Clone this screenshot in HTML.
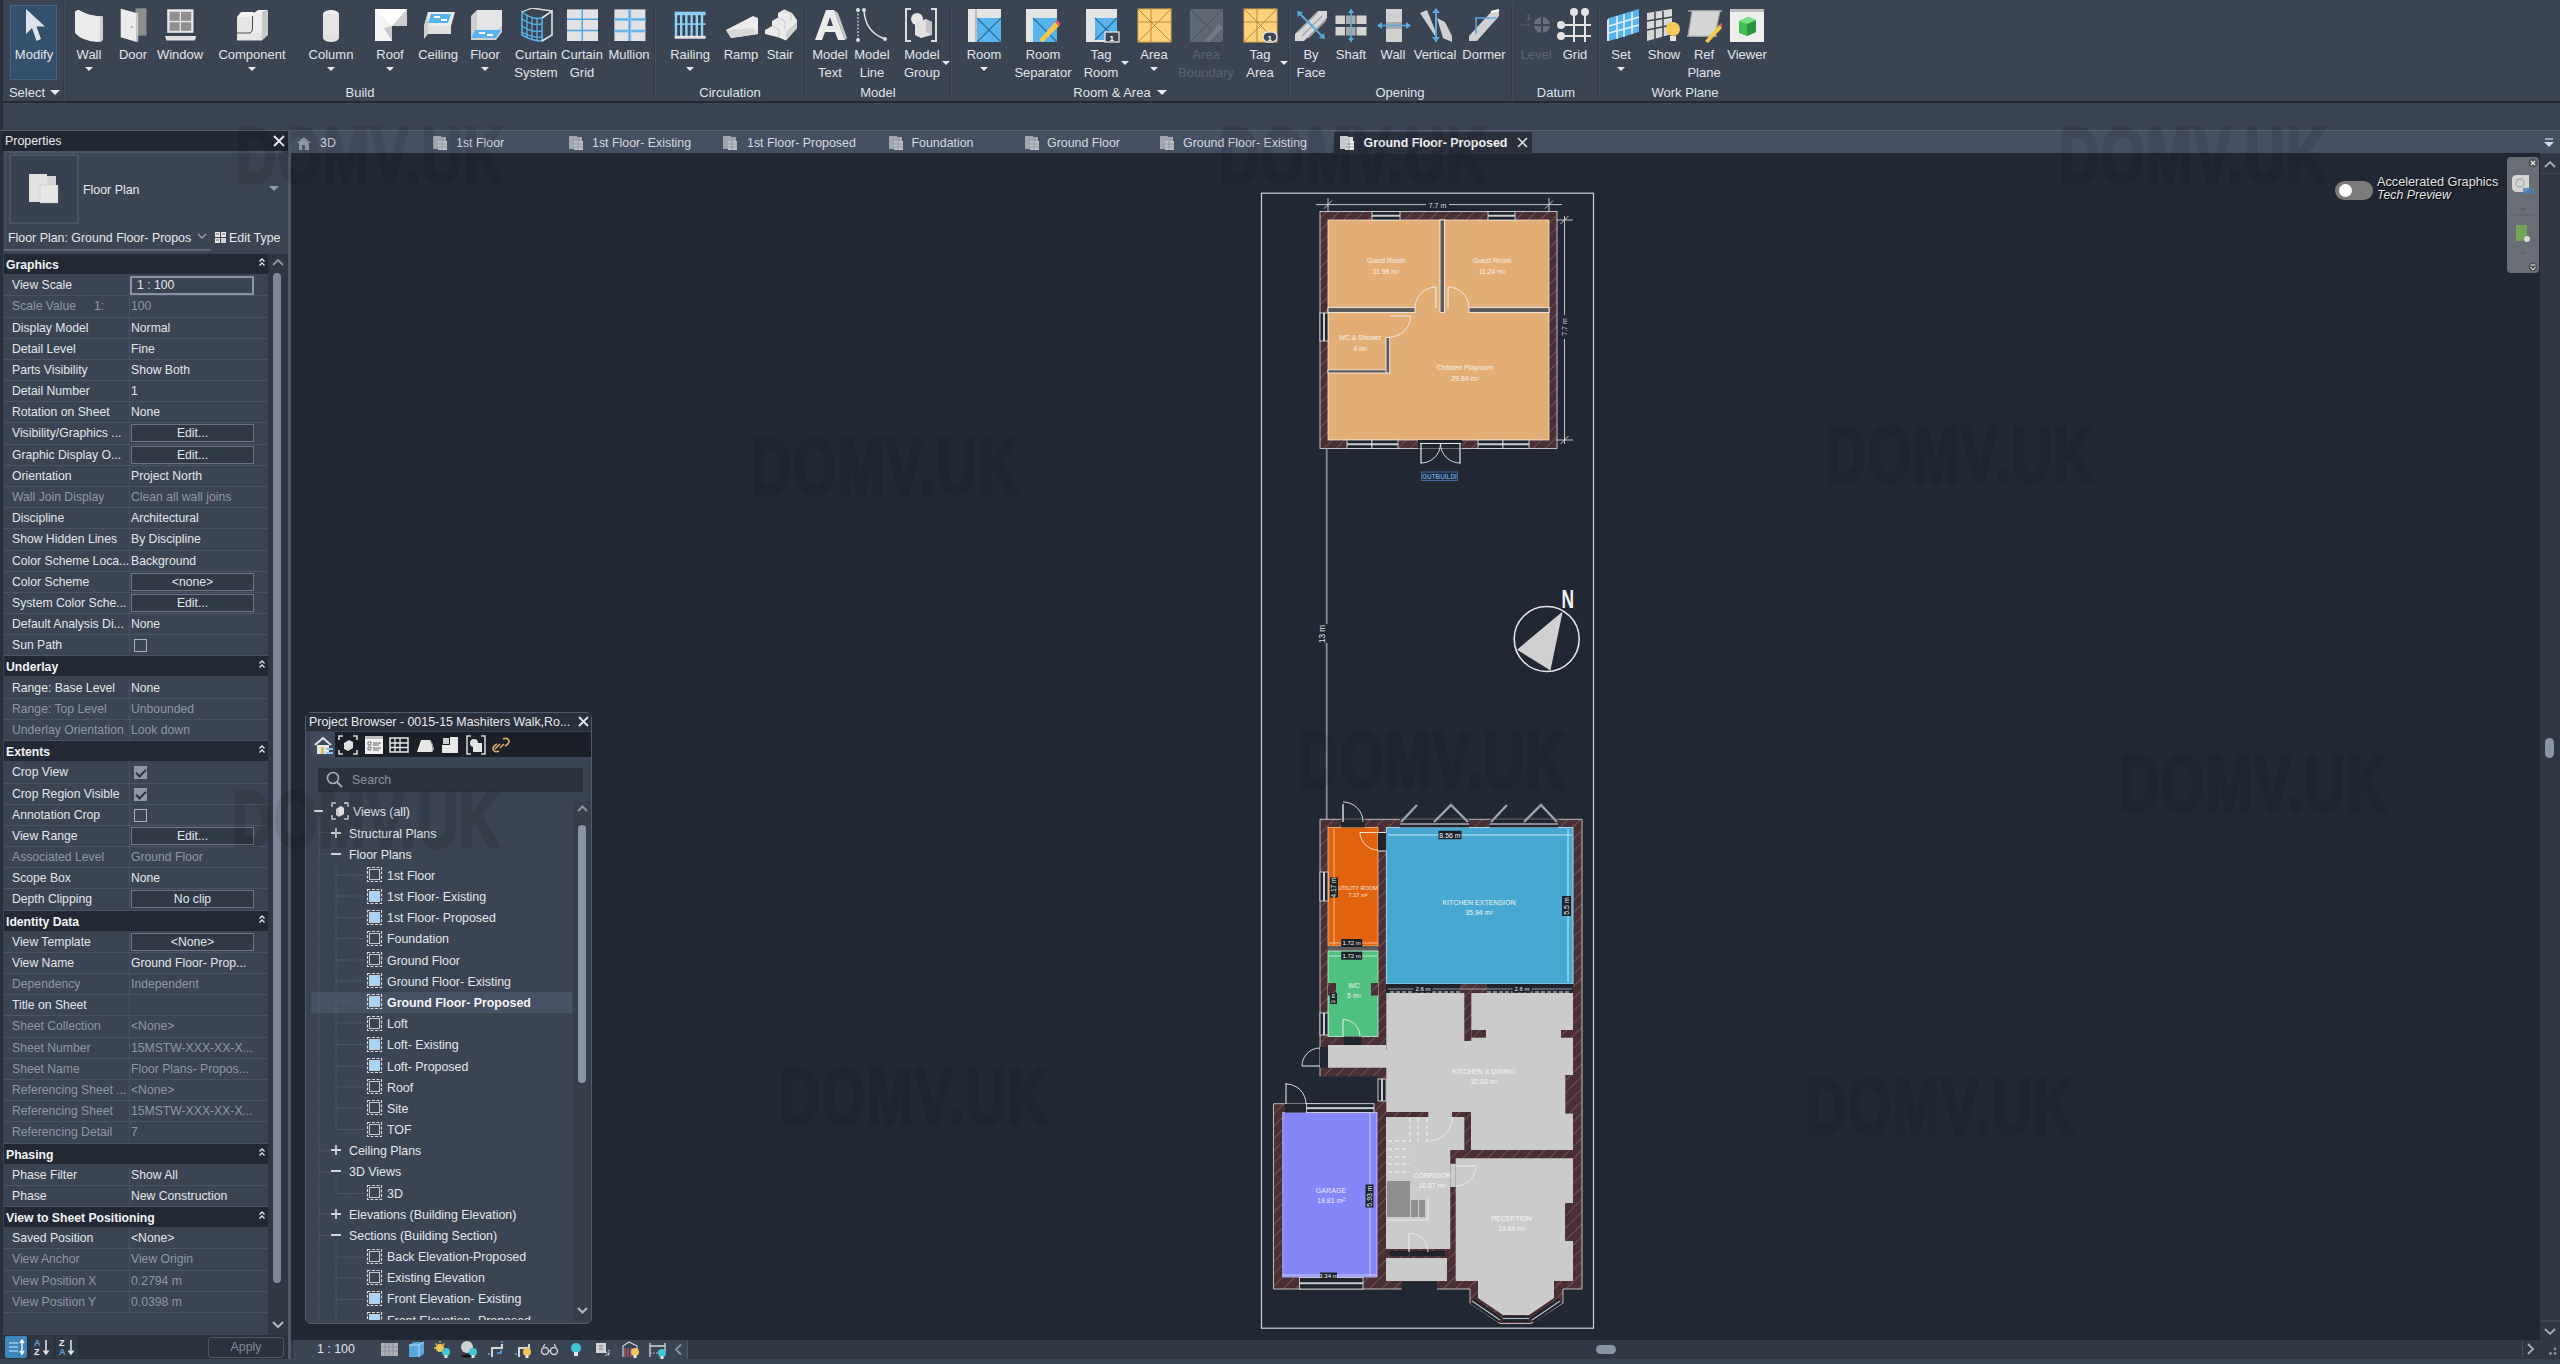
<!DOCTYPE html>
<html><head><meta charset="utf-8">
<style>
*{margin:0;padding:0;box-sizing:border-box}
html,body{width:2560px;height:1364px;overflow:hidden;background:#3b4453;font-family:"Liberation Sans",sans-serif;color:#e6e9ee}
.a{position:absolute}
#ribbon{left:0;top:0;width:2560px;height:101px;background:#3b4453}
#ribbonline{left:0;top:101px;width:2560px;height:2px;background:#252b35}
#options{left:0;top:103px;width:2560px;height:28px;background:#3b4453}
#tabbar{left:291px;top:130px;width:2269px;height:23px;background:#465063;border-top:1px solid #566074}
#canvas{left:291px;top:153px;width:2249px;height:1187px;background:#222833;overflow:hidden}
#props{left:0;top:131px;width:288px;height:1233px;background:#3b4453}
#leftstrip{left:0;top:131px;width:3px;height:1233px;background:#2a303b}
#divider{left:288px;top:131px;width:3px;height:1233px;background:#4f596a}
#propshdr{left:2px;top:131px;width:286px;height:20px;background:#222833}
#bottom{left:0;top:1359px;width:2560px;height:5px;background:#3b4453}
#vscroll{left:2540px;top:154px;width:20px;height:1186px;background:#303744}
#hbar{left:291px;top:1340px;width:2269px;height:19px;background:#313845}


#pgrid{left:4px;top:254px;width:264px;height:1060px;overflow:hidden}
.pr{position:absolute;left:0;width:264px;height:21.2px;border-bottom:1px solid #4a5365;background:#3b4453}
.pr .l{position:absolute;left:8px;top:0;line-height:20px;font-size:12.2px;color:#e3e6eb;white-space:nowrap}
.pr .v{position:absolute;left:127px;top:0;line-height:20px;font-size:12.2px;color:#e3e6eb;white-space:nowrap;padding-left:0}
.pr.g .l,.pr.g .v{color:#8e97a6}
.pr .cd{position:absolute;left:125px;top:0;width:1px;height:21px;background:#465063}
.pr .cd2{position:absolute;left:252px;top:0;width:1px;height:21px;background:#465063}
.ph{position:absolute;left:0;width:264px;height:20px;background:#232934}
.ph .l{position:absolute;left:2px;top:2px;line-height:19px;font-size:12.2px;font-weight:bold;color:#f2f4f6}
.ph .c{position:absolute;left:254px;top:3px;width:8px;height:10px}
.pbtn{position:absolute;left:127px;top:1px;width:123px;height:18px;border:1px solid #6b7486;background:#313947;text-align:center;line-height:17px;font-size:12.2px;color:#e3e6eb}
.pbox{position:absolute;left:126px;top:1px;width:124px;height:19px;border:2px solid #8a93a3;background:#3b4453;line-height:15px;font-size:12.2px;color:#e3e6eb;padding-left:5px}
.chk{position:absolute;left:130px;top:4px;width:13px;height:13px;border:1px solid #aab1bd;background:transparent}
.chk.on{background:#8f97a4;border-color:#8f97a4}
.chk.on:after{content:"";position:absolute;left:3px;top:0px;width:4px;height:8px;border:solid #2b313c;border-width:0 2px 2px 0;transform:rotate(45deg)}


#ptitle{left:5px;top:131px;line-height:20px;font-size:12.4px;color:#e8eaee}
#pclose{left:273px;top:135px;width:12px;height:12px}
#psel{left:5px;top:151px;width:278px;height:100px;border-top:2px solid #4b5568;border-left:1px solid #4b5568}
#picobox{left:9px;top:154px;width:70px;height:70px;border:2px solid #4a5466;background:#384150}
#pfp{left:83px;top:181px;font-size:12.4px;color:#e6e9ee;line-height:18px}
#pdrop{left:269px;top:186px;width:0;height:0;border-left:5px solid transparent;border-right:5px solid transparent;border-top:5px solid #8f98a8}
#pvname{left:8px;top:229px;font-size:12.4px;color:#e6e9ee;line-height:18px;white-space:nowrap;width:184px;overflow:hidden}
#pvline{left:4px;top:249px;width:207px;height:2px;background:#5b6577}
#pchev{left:197px;top:231px;width:10px;height:10px}
#petype{left:229px;top:229px;font-size:12.4px;color:#e6e9ee;line-height:18px;white-space:nowrap}
#petico{left:215px;top:232px;width:11px;height:11px}
#psbar{left:268px;top:254px;width:20px;height:1081px;background:#303643}
#psthumb{left:273px;top:273px;width:8px;height:1010px;border-radius:4px;background:#7c889a}
#pbot{left:3px;top:1335px;width:285px;height:24px;background:#2c323d}
#papply{left:208px;top:1337px;width:76px;height:21px;border:1px solid #4b5466;border-radius:3px;font-size:12.4px;color:#7f8795;text-align:center;line-height:19px}
#psort1{left:5px;top:1336px;width:22px;height:22px;background:#3d86b9;border-radius:2px}


.rl{position:absolute;font-size:13px;color:#e2e5ea;white-space:nowrap;line-height:16px;transform:translateX(-50%);text-align:center}
.rl.gr{color:#586171}
.rarr{position:absolute;width:0;height:0;border-left:4px solid transparent;border-right:4px solid transparent;border-top:4px solid #e8ebef}
.rsep{position:absolute;top:4px;width:2px;height:96px;background:#343c49;border-right:1px solid #444d5c}
.rpl{position:absolute;top:84px;font-size:13px;color:#dfe3e8;line-height:17px;white-space:nowrap;transform:translateX(-50%)}
#modhl{left:10px;top:5px;width:47px;height:75px;background:#35506a;border:1px solid #3d6683}
#panelbar{left:3px;top:84px;width:1940px;height:17px;background:#3b4453}


.tt{position:absolute;top:134px;font-size:12.4px;line-height:18px;color:#d6dae0;white-space:nowrap}
#acttab{left:1334px;top:132px;width:198px;height:22px;background:#2a313d}


#plan{position:absolute;left:291px;top:154px}


#pb{left:305px;top:712px;width:287px;height:612px;background:#3b4453;border:1px solid #535c6d;border-radius:6px;overflow:hidden}
#pbtitle{left:306px;top:713px;width:285px;height:18px;background:#2a303b}
#pbtt{left:309px;top:713px;font-size:12.4px;line-height:18px;color:#e8eaee;white-space:nowrap}
#pbtool{left:335px;top:732px;width:256px;height:25px;background:#1b1f27}
#pbhome{left:311px;top:732px;width:24px;height:25px;background:#3f4a5c}
#pbsearch{left:318px;top:768px;width:265px;height:24px;background:#2c333f}
#pbst{left:352px;top:771px;font-size:12.4px;line-height:18px;color:#8b93a0}
#pbtree{left:311px;top:800px;width:262px;height:518px;overflow:hidden}
.pbr{position:absolute;font-size:12.4px;line-height:18px;color:#e3e6eb;white-space:nowrap}
#pbsb{left:573px;top:801px;width:18px;height:520px;background:#363e4b}
#pbthumb{left:578px;top:825px;width:8px;height:258px;border-radius:4px;background:#8994a6}
#pbsel{left:311px;top:992px;width:261px;height:21px;background:#475164}


#vcb{left:293px;top:1340px;width:395px;height:19px;background:#3b4453;border-right:1px solid #4f596a}
#vcbt{left:317px;top:1340px;font-size:12.4px;line-height:19px;color:#dfe3e8;white-space:nowrap}
#hthumb{left:1596px;top:1345px;width:20px;height:9px;border-radius:4.5px;background:#8994a6}
#navbar{left:2507px;top:157px;width:32px;height:116px;border-radius:4px;background:#686d76}
#agt{left:2377px;top:174px;font-size:12.7px;line-height:16px;color:#e2e4e8;white-space:nowrap;text-shadow:1px 1px 1px #000}
#agt2{left:2377px;top:187px;font-size:12.4px;line-height:16px;color:#e2e4e8;white-space:nowrap;font-style:italic;text-shadow:1px 1px 1px #000}
#tog{left:2335px;top:180.5px;width:38px;height:19.5px;border-radius:10px;background:#7b7b7b}
#togk{left:2339px;top:184px;width:13px;height:13px;border-radius:50%;background:#ffffff}
.wm{position:absolute;font-family:"Liberation Sans",sans-serif;font-weight:bold;font-size:80px;line-height:60px;color:#000;opacity:0.085;white-space:nowrap;transform-origin:0 0;transform:scaleX(0.70);letter-spacing:2px;-webkit-text-stroke:3px #000}
</style></head><body>
<div id="ribbon" class="a"></div><div id="ribbonline" class="a"></div><div id="options" class="a"></div><div class="a" style="left:0;top:0;width:3px;height:131px;background:#2a303b"></div><div class="a" style="left:0;top:130px;width:291px;height:1px;background:#535d6f"></div>
<div id="props" class="a"></div><div id="leftstrip" class="a"></div><div id="propshdr" class="a"></div><div id="divider" class="a"></div>
<div id="tabbar" class="a"></div><div id="canvas" class="a"></div><div id="vscroll" class="a"></div><div id="hbar" class="a"></div><div id="bottom" class="a"></div>
<div id="pgrid" class="a"><div class="ph" style="top:0.00px"><span class="l">Graphics</span><svg class="c" viewBox="0 0 8 10"><path d="M1.5 4.5L4 2L6.5 4.5M1.5 8.5L4 6L6.5 8.5" stroke="#e6e9ee" stroke-width="1.3" fill="none"/></svg></div><div class="pr" style="top:21.18px"><span class="l">View Scale</span><span class="cd"></span><span class="pbox">1 : 100</span></div><div class="pr g" style="top:42.36px"><span class="l">Scale Value<span style="position:absolute;left:82px">1:</span></span><span class="cd"></span><span class="v">100</span></div><div class="pr" style="top:63.54px"><span class="l">Display Model</span><span class="cd"></span><span class="v">Normal</span></div><div class="pr" style="top:84.72px"><span class="l">Detail Level</span><span class="cd"></span><span class="v">Fine</span></div><div class="pr" style="top:105.90px"><span class="l">Parts Visibility</span><span class="cd"></span><span class="v">Show Both</span></div><div class="pr" style="top:127.08px"><span class="l">Detail Number</span><span class="cd"></span><span class="v">1</span></div><div class="pr" style="top:148.26px"><span class="l">Rotation on Sheet</span><span class="cd"></span><span class="v">None</span></div><div class="pr" style="top:169.44px"><span class="l">Visibility/Graphics ...</span><span class="cd"></span><span class="pbtn">Edit...</span></div><div class="pr" style="top:190.62px"><span class="l">Graphic Display O...</span><span class="cd"></span><span class="pbtn">Edit...</span></div><div class="pr" style="top:211.80px"><span class="l">Orientation</span><span class="cd"></span><span class="v">Project North</span></div><div class="pr g" style="top:232.98px"><span class="l">Wall Join Display</span><span class="cd"></span><span class="v">Clean all wall joins</span></div><div class="pr" style="top:254.16px"><span class="l">Discipline</span><span class="cd"></span><span class="v">Architectural</span></div><div class="pr" style="top:275.34px"><span class="l">Show Hidden Lines</span><span class="cd"></span><span class="v">By Discipline</span></div><div class="pr" style="top:296.52px"><span class="l">Color Scheme Loca...</span><span class="cd"></span><span class="v">Background</span></div><div class="pr" style="top:317.70px"><span class="l">Color Scheme</span><span class="cd"></span><span class="pbtn">&lt;none&gt;</span></div><div class="pr" style="top:338.88px"><span class="l">System Color Sche...</span><span class="cd"></span><span class="pbtn">Edit...</span></div><div class="pr" style="top:360.06px"><span class="l">Default Analysis Di...</span><span class="cd"></span><span class="v">None</span></div><div class="pr" style="top:381.24px"><span class="l">Sun Path</span><span class="cd"></span><span class="chk"></span></div><div class="ph" style="top:402.42px"><span class="l">Underlay</span><svg class="c" viewBox="0 0 8 10"><path d="M1.5 4.5L4 2L6.5 4.5M1.5 8.5L4 6L6.5 8.5" stroke="#e6e9ee" stroke-width="1.3" fill="none"/></svg></div><div class="pr" style="top:423.60px"><span class="l">Range: Base Level</span><span class="cd"></span><span class="v">None</span></div><div class="pr g" style="top:444.78px"><span class="l">Range: Top Level</span><span class="cd"></span><span class="v">Unbounded</span></div><div class="pr g" style="top:465.96px"><span class="l">Underlay Orientation</span><span class="cd"></span><span class="v">Look down</span></div><div class="ph" style="top:487.14px"><span class="l">Extents</span><svg class="c" viewBox="0 0 8 10"><path d="M1.5 4.5L4 2L6.5 4.5M1.5 8.5L4 6L6.5 8.5" stroke="#e6e9ee" stroke-width="1.3" fill="none"/></svg></div><div class="pr" style="top:508.32px"><span class="l">Crop View</span><span class="cd"></span><span class="chk on"></span></div><div class="pr" style="top:529.50px"><span class="l">Crop Region Visible</span><span class="cd"></span><span class="chk on"></span></div><div class="pr" style="top:550.68px"><span class="l">Annotation Crop</span><span class="cd"></span><span class="chk"></span></div><div class="pr" style="top:571.86px"><span class="l">View Range</span><span class="cd"></span><span class="pbtn">Edit...</span></div><div class="pr g" style="top:593.04px"><span class="l">Associated Level</span><span class="cd"></span><span class="v">Ground Floor</span></div><div class="pr" style="top:614.22px"><span class="l">Scope Box</span><span class="cd"></span><span class="v">None</span></div><div class="pr" style="top:635.40px"><span class="l">Depth Clipping</span><span class="cd"></span><span class="pbtn">No clip</span></div><div class="ph" style="top:656.58px"><span class="l">Identity Data</span><svg class="c" viewBox="0 0 8 10"><path d="M1.5 4.5L4 2L6.5 4.5M1.5 8.5L4 6L6.5 8.5" stroke="#e6e9ee" stroke-width="1.3" fill="none"/></svg></div><div class="pr" style="top:677.76px"><span class="l">View Template</span><span class="cd"></span><span class="pbtn">&lt;None&gt;</span></div><div class="pr" style="top:698.94px"><span class="l">View Name</span><span class="cd"></span><span class="v">Ground Floor- Prop...</span></div><div class="pr g" style="top:720.12px"><span class="l">Dependency</span><span class="cd"></span><span class="v">Independent</span></div><div class="pr" style="top:741.30px"><span class="l">Title on Sheet</span><span class="cd"></span><span class="v"></span></div><div class="pr g" style="top:762.48px"><span class="l">Sheet Collection</span><span class="cd"></span><span class="v">&lt;None&gt;</span></div><div class="pr g" style="top:783.66px"><span class="l">Sheet Number</span><span class="cd"></span><span class="v">15MSTW-XXX-XX-X...</span></div><div class="pr g" style="top:804.84px"><span class="l">Sheet Name</span><span class="cd"></span><span class="v">Floor Plans- Propos...</span></div><div class="pr g" style="top:826.02px"><span class="l">Referencing Sheet ...</span><span class="cd"></span><span class="v">&lt;None&gt;</span></div><div class="pr g" style="top:847.20px"><span class="l">Referencing Sheet</span><span class="cd"></span><span class="v">15MSTW-XXX-XX-X...</span></div><div class="pr g" style="top:868.38px"><span class="l">Referencing Detail</span><span class="cd"></span><span class="v">7</span></div><div class="ph" style="top:889.56px"><span class="l">Phasing</span><svg class="c" viewBox="0 0 8 10"><path d="M1.5 4.5L4 2L6.5 4.5M1.5 8.5L4 6L6.5 8.5" stroke="#e6e9ee" stroke-width="1.3" fill="none"/></svg></div><div class="pr" style="top:910.74px"><span class="l">Phase Filter</span><span class="cd"></span><span class="v">Show All</span></div><div class="pr" style="top:931.92px"><span class="l">Phase</span><span class="cd"></span><span class="v">New Construction</span></div><div class="ph" style="top:953.10px"><span class="l">View to Sheet Positioning</span><svg class="c" viewBox="0 0 8 10"><path d="M1.5 4.5L4 2L6.5 4.5M1.5 8.5L4 6L6.5 8.5" stroke="#e6e9ee" stroke-width="1.3" fill="none"/></svg></div><div class="pr" style="top:974.28px"><span class="l">Saved Position</span><span class="cd"></span><span class="v">&lt;None&gt;</span></div><div class="pr g" style="top:995.46px"><span class="l">View Anchor</span><span class="cd"></span><span class="v">View Origin</span></div><div class="pr g" style="top:1016.64px"><span class="l">View Position X</span><span class="cd"></span><span class="v">0.2794 m</span></div><div class="pr g" style="top:1037.82px"><span class="l">View Position Y</span><span class="cd"></span><span class="v">0.0398 m</span></div></div>
<div id="ptitle" class="a">Properties</div>
<svg id="pclose" class="a" viewBox="0 0 12 12"><path d="M1 1L11 11M11 1L1 11" stroke="#e3e6ea" stroke-width="2"/></svg>
<div id="psel" class="a"></div>
<div id="picobox" class="a"></div>
<svg class="a" style="left:28px;top:173px" width="32" height="32" viewBox="0 0 32 32"><rect x="1" y="1" width="18" height="28" fill="#e1e1e1"/><rect x="19" y="3" width="9" height="10" fill="#d5d5d5"/><rect x="12" y="12" width="18" height="18" fill="#e6e6e6" stroke="#b8b8b8" stroke-width="0.6" stroke-dasharray="1.5 1"/></svg>
<div id="pfp" class="a">Floor Plan</div>
<div id="pdrop" class="a"></div>
<div id="pvname" class="a">Floor Plan: Ground Floor- Propos</div>
<div id="pvline" class="a"></div>
<svg id="pchev" class="a" viewBox="0 0 10 10"><path d="M1 3L5 7L9 3" stroke="#9aa2b0" stroke-width="1.3" fill="none"/></svg>
<svg id="petico" class="a" viewBox="0 0 11 11"><rect x="0" y="0" width="5" height="5" fill="#e6e6e6"/><rect x="6" y="0" width="5" height="5" fill="#e6e6e6"/><rect x="0" y="6" width="5" height="5" fill="#e6e6e6"/><rect x="6" y="6" width="5" height="5" fill="#cfd3d9"/><path d="M1 2h3M7 2h3M1 8h3" stroke="#444" stroke-width="0.8"/></svg>
<div id="petype" class="a">Edit Type</div>
<div id="psbar" class="a"></div>
<svg class="a" style="left:271px;top:258px" width="14" height="9" viewBox="0 0 14 9"><path d="M2 7L7 2L12 7" stroke="#8b94a3" stroke-width="2" fill="none"/></svg>
<div id="psthumb" class="a"></div>
<svg class="a" style="left:271px;top:1320px" width="14" height="9" viewBox="0 0 14 9"><path d="M2 2L7 7L12 2" stroke="#b4bac4" stroke-width="2" fill="none"/></svg>
<div id="pbot" class="a"></div>
<div id="psort1" class="a"><svg width="22" height="22" viewBox="0 0 22 22"><path d="M4 7h9M4 11h9M4 15h9" stroke="#9cc7e6" stroke-width="1.5"/><path d="M17 5v12M15 7l2-3 2 3M15 15l2 3 2-3" stroke="#ffffff" stroke-width="1.4" fill="none"/></svg></div>
<svg class="a" style="left:31px;top:1336px" width="22" height="22" viewBox="0 0 22 22"><rect x="0" y="0" width="22" height="22" fill="#323946"/><text x="3" y="10" font-size="9" fill="#5aa0d8" font-family="Liberation Sans" font-weight="bold">A</text><text x="3" y="19" font-size="9" fill="#e6e9ee" font-family="Liberation Sans" font-weight="bold">Z</text><path d="M15 4v13M12.5 14.5L15 18l2.5-3.5" stroke="#e6e9ee" stroke-width="1.5" fill="none"/></svg>
<svg class="a" style="left:56px;top:1336px" width="22" height="22" viewBox="0 0 22 22"><rect x="0" y="0" width="22" height="22" fill="#323946"/><text x="3" y="10" font-size="9" fill="#e6e9ee" font-family="Liberation Sans" font-weight="bold">Z</text><text x="3" y="19" font-size="9" fill="#5aa0d8" font-family="Liberation Sans" font-weight="bold">A</text><path d="M15 4v13M12.5 14.5L15 18l2.5-3.5" stroke="#e6e9ee" stroke-width="1.5" fill="none"/></svg>
<div id="papply" class="a">Apply</div>
<div id="modhl" class="a"></div>
<svg class="a" style="left:17px;top:8px" width="35" height="35" viewBox="0 0 35 35"><path d="M9 1L9 26L15 20L19.5 33L24 31L19.5 18.5L28 18.5Z" fill="#dde3ea"/></svg>
<div class="rl" style="left:34px;top:47px">Modify</div>
<svg class="a" style="left:72px;top:8px" width="35" height="35" viewBox="0 0 35 35"><path d="M3 4 Q4 1.5 7 2 Q15 7.5 31 8.5 L31 31 Q30 34 25 34 Q10 33 3 25 Z" fill="#ececec"/><path d="M28 8.3 L31 8.5 L31 31 Q30.5 33.5 28 34 Z" fill="#cdcdcd"/></svg>
<div class="rl" style="left:89px;top:47px">Wall</div>
<div class="rarr" style="left:85px;top:67px"></div>
<svg class="a" style="left:117px;top:8px" width="35" height="35" viewBox="0 0 35 35"><rect x="18.5" y="0.3" width="11" height="27.3" fill="#8e8e8e"/><path d="M3.7 0.8 L19.6 5.1 L19.6 34.1 L3.7 29.2 Z" fill="#ebebeb"/><path d="M19.6 5.1 L21.2 4.6 L21.2 33.6 L19.6 34.1 Z" fill="#c9c9c9"/><circle cx="14.7" cy="18.8" r="0.9" fill="#8a8a8a"/></svg>
<div class="rl" style="left:133px;top:47px">Door</div>
<svg class="a" style="left:163px;top:8px" width="35" height="35" viewBox="0 0 35 35"><rect x="4.2" y="1.3" width="26.3" height="23.5" fill="#e8e8e8"/><rect x="6.5" y="3.8" width="10.2" height="9" fill="#8f8f8f"/><rect x="18" y="3.8" width="10.2" height="9" fill="#8f8f8f"/><rect x="6.5" y="14.3" width="10.2" height="8.5" fill="#8f8f8f"/><rect x="18" y="14.3" width="10.2" height="8.5" fill="#8f8f8f"/><path d="M2 28 L33.2 28 L32 32.5 L3.3 32.5 Z" fill="#e0e0e0"/></svg>
<div class="rl" style="left:180px;top:47px">Window</div>
<svg class="a" style="left:235px;top:8px" width="35" height="35" viewBox="0 0 35 35"><rect x="2" y="9" width="15" height="16" fill="#e6e6e6"/><rect x="17" y="5" width="10" height="27" fill="#ececec"/><rect x="2" y="25" width="25" height="7.5" fill="#e6e6e6"/><path d="M2 9 L6 4 L19 4 L17 9 Z" fill="#f2f2f2"/><path d="M19 5 L23 2 L33 2 L27 5 Z" fill="#f4f4f4"/><path d="M27 5 L33 2 L33 27 L27 32.5 Z" fill="#c8c8c8"/><path d="M2 25 L15 25 Q17 24.5 17.5 21 L17.5 8" stroke="#4a4a4a" stroke-width="1" fill="none"/></svg>
<div class="rl" style="left:252px;top:47px">Component</div>
<div class="rarr" style="left:248px;top:67px"></div>
<svg class="a" style="left:314px;top:8px" width="35" height="35" viewBox="0 0 35 35"><ellipse cx="17" cy="6" rx="8" ry="4" fill="#f0f0f0"/><rect x="9" y="6" width="16" height="24" fill="#e4e4e4"/><ellipse cx="17" cy="30" rx="8" ry="4" fill="#e0e0e0"/></svg>
<div class="rl" style="left:331px;top:47px">Column</div>
<div class="rarr" style="left:327px;top:67px"></div>
<svg class="a" style="left:374px;top:8px" width="35" height="35" viewBox="0 0 35 35"><path d="M1 1L33 1L33 18L18 18L18 33L1 33Z" fill="#e6e6e6"/><path d="M1 1L18 18L18 33L1 33Z" fill="#f4f4f4"/><path d="M1 1L33 1L18 18Z" fill="#ffffff"/><path d="M18 18L33 18L33 1Z" fill="#cfcfcf"/><path d="M18 18L18 33L10 20Z" fill="#c8c8c8"/></svg>
<div class="rl" style="left:390px;top:47px">Roof</div>
<div class="rarr" style="left:386px;top:67px"></div>
<svg class="a" style="left:422px;top:8px" width="35" height="35" viewBox="0 0 35 35"><path d="M6 4L33 4L29 18L2 18Z" fill="#eaeaea"/><path d="M9 6L29 6L26 15L6 15Z" fill="#58b4ec"/><path d="M12 9h6M19 12h6" stroke="#fff" stroke-width="2"/><path d="M2 18L6 4L6 26L2 31Z" fill="#cfcfcf"/><path d="M6 18L29 18L29 26L6 26Z" fill="#e0e0e0"/></svg>
<div class="rl" style="left:438px;top:47px">Ceiling</div>
<svg class="a" style="left:469px;top:8px" width="35" height="35" viewBox="0 0 35 35"><path d="M8 2L33 2L33 22L8 22Z" fill="#e4e4e4"/><path d="M8 2L8 22L2 29L2 8Z" fill="#cfcfcf"/><path d="M2 22L27 22L33 18L33 24L27 32L2 32Z" fill="#cfcfcf"/><path d="M6 22L32 22L27 30L2 30Z" fill="#58b4ec"/><path d="M10 25h6M18 27h6" stroke="#fff" stroke-width="2"/></svg>
<div class="rl" style="left:485px;top:47px">Floor</div>
<div class="rarr" style="left:481px;top:67px"></div>
<svg class="a" style="left:520px;top:8px" width="35" height="35" viewBox="0 0 35 35"><path d="M2 4Q12 12 22 10L22 33Q12 33 2 27Z" fill="none" stroke="#5ab2e6" stroke-width="1.6"/><path d="M22 10L32 3L32 27L22 33" fill="none" stroke="#e0e0e0" stroke-width="1.6"/><path d="M2 4L12 0L32 3" fill="none" stroke="#e0e0e0" stroke-width="1.3"/><path d="M7 7L7 30M12 9L12 32M17 10L17 33M2 11Q12 18 22 16M2 18Q12 25 22 23M2 24Q12 30 22 29" stroke="#5ab2e6" stroke-width="1.3" fill="none"/></svg>
<div class="rl" style="left:536px;top:47px">Curtain</div>
<div class="rl" style="left:536px;top:65px">System</div>
<svg class="a" style="left:566px;top:8px" width="35" height="35" viewBox="0 0 35 35"><rect x="1" y="1.4" width="31" height="31.6" fill="#e2e2e2"/><path d="M1 11.3h31M1 22.5h31M16.2 1.4v31.6" stroke="#4aa3e0" stroke-width="1.4"/></svg>
<div class="rl" style="left:582px;top:47px">Curtain</div>
<div class="rl" style="left:582px;top:65px">Grid</div>
<svg class="a" style="left:614px;top:8px" width="35" height="35" viewBox="0 0 35 35"><rect x="0.4" y="1.4" width="31" height="31.6" fill="#e2e2e2"/><path d="M0.4 11.3h31M0.4 23h31" stroke="#8fc8f0" stroke-width="3.2"/><path d="M0.4 11.3h31M0.4 23h31" stroke="#4aa3e0" stroke-width="1"/><path d="M15.6 1.4v31.6" stroke="#8fc8f0" stroke-width="3.4"/><path d="M15.6 1.4v31.6" stroke="#4aa3e0" stroke-width="1"/></svg>
<div class="rl" style="left:629px;top:47px">Mullion</div>
<svg class="a" style="left:673px;top:8px" width="35" height="35" viewBox="0 0 35 35"><rect x="1.6" y="3.7" width="31" height="3.5" fill="#8dcff5"/><path d="M3 7v21M8.2 7v21M13.4 7v21M18.6 7v21M23.8 7v21M29 7v21" stroke="#8dcff5" stroke-width="2.4"/><rect x="1.6" y="15.3" width="31" height="1.6" fill="#8dcff5"/><rect x="1.6" y="27.8" width="31" height="2.9" fill="#e4e4e4"/></svg>
<div class="rl" style="left:690px;top:47px">Railing</div>
<div class="rarr" style="left:686px;top:67px"></div>
<svg class="a" style="left:725px;top:8px" width="35" height="35" viewBox="0 0 35 35"><path d="M1 22L28 8L33 10L33 26L6 30Z" fill="#ececec"/><path d="M1 22L6 30L33 26L28 20Z" fill="#d8d8d8"/></svg>
<div class="rl" style="left:741px;top:47px">Ramp</div>
<svg class="a" style="left:764px;top:8px" width="35" height="35" viewBox="0 0 35 35"><path d="M1 22 L8 18 L8 13 L14 9.5 L14 5 L20 1.5 L28 5 L33 12 L33 20 L22 32.5 L15 29.5 L1 26 Z" fill="#ebebeb"/><path d="M22 24.5 L33 13.5 L33 20 L22 32.5 Z" fill="#cfcfcf"/><path d="M8 18 L15 21.5 L15 29.5 M14 9.5 L21 13 L21 21 M20 1.5 L27 5 L27 13" stroke="#c4c4c4" stroke-width="0.9" fill="none"/></svg>
<div class="rl" style="left:780px;top:47px">Stair</div>
<svg class="a" style="left:814px;top:8px" width="35" height="35" viewBox="0 0 35 35"><path d="M1 32L12 2L20 2L31 32L24 32L21 24L11 24L8 32Z" fill="#ececec"/><path d="M13 18L19 18L16 9Z" fill="#3b4453"/><path d="M20 2L24 5L33 30L31 32Z" fill="#c6c6c6"/></svg>
<div class="rl" style="left:830px;top:47px">Model</div>
<div class="rl" style="left:830px;top:65px">Text</div>
<svg class="a" style="left:855px;top:8px" width="35" height="35" viewBox="0 0 35 35"><path d="M3 2L3 32" stroke="#cfcfcf" stroke-width="1.3" stroke-dasharray="2 1.5"/><path d="M9 2Q10 24 30 31" stroke="#e4e4e4" stroke-width="1.5" fill="none"/><circle cx="3" cy="2" r="2" fill="#ddd"/><circle cx="9" cy="2" r="2" fill="#ddd"/><circle cx="3" cy="32" r="2" fill="#ddd"/><circle cx="30" cy="31" r="2" fill="#ddd"/></svg>
<div class="rl" style="left:872px;top:47px">Model</div>
<div class="rl" style="left:872px;top:65px">Line</div>
<svg class="a" style="left:904px;top:8px" width="35" height="35" viewBox="0 0 35 35"><path d="M7 1L2 1L2 33L7 33M27 1L32 1L32 33L27 33" stroke="#dcdcdc" stroke-width="2" fill="none"/><circle cx="13" cy="11" r="6" fill="#e8e8e8"/><path d="M11 15L22 11L28 14L28 27L17 30L11 27Z" fill="#e0e0e0"/><path d="M22 11L28 14L28 27L22 24Z" fill="#c4c4c4"/></svg>
<div class="rl" style="left:922px;top:47px">Model</div>
<div class="rl" style="left:922px;top:65px">Group</div>
<div class="rarr" style="left:942px;top:61px"></div>
<svg class="a" style="left:967px;top:8px" width="35" height="35" viewBox="0 0 35 35"><rect x="1" y="1" width="33" height="33" fill="#e4e4e4"/><rect x="10" y="10" width="24" height="24" fill="#58b4ec"/><path d="M10 10L34 34M34 10L10 34" stroke="#2d6fa0" stroke-width="1.2"/><rect x="10" y="1" width="24" height="7" fill="#e4e4e4"/><rect x="8" y="1" width="2" height="33" fill="#bdbdbd"/></svg>
<div class="rl" style="left:984px;top:47px">Room</div>
<div class="rarr" style="left:980px;top:67px"></div>
<svg class="a" style="left:1025px;top:8px" width="35" height="35" viewBox="0 0 35 35"><rect x="1" y="1" width="31" height="33" fill="#e4e4e4"/><rect x="8" y="10" width="24" height="24" fill="#58b4ec"/><path d="M8 10L32 34" stroke="#2d6fa0" stroke-width="1.2"/><path d="M14 32L30 14L34 18L18 34Z" fill="#f2c94c"/><path d="M30 14L34 18L36 16L32 12Z" fill="#e85d5d"/></svg>
<div class="rl" style="left:1043px;top:47px">Room</div>
<div class="rl" style="left:1043px;top:65px">Separator</div>
<svg class="a" style="left:1085px;top:8px" width="35" height="35" viewBox="0 0 35 35"><rect x="1" y="1" width="31" height="33" fill="#e4e4e4"/><rect x="10" y="10" width="22" height="22" fill="#58b4ec"/><path d="M10 10L32 32M32 10L10 32" stroke="#2d6fa0" stroke-width="1.2"/><rect x="20" y="24" width="14" height="10" fill="#3b4453" stroke="#e4e4e4" stroke-width="1.3"/><text x="24.5" y="32.5" font-size="8" fill="#fff" font-family="Liberation Sans" font-weight="bold">1</text></svg>
<div class="rl" style="left:1101px;top:47px">Tag</div>
<div class="rl" style="left:1101px;top:65px">Room</div>
<div class="rarr" style="left:1121px;top:61px"></div>
<svg class="a" style="left:1137px;top:8px" width="35" height="35" viewBox="0 0 35 35"><rect x="1" y="1" width="33" height="33" fill="#fdd27a" stroke="#e0a94a" stroke-width="1"/><path d="M1 1L34 34M34 1L1 34M1 14h33M14 1v33" stroke="#b3843c" stroke-width="0.9"/></svg>
<div class="rl" style="left:1154px;top:47px">Area</div>
<div class="rarr" style="left:1150px;top:67px"></div>
<svg class="a" style="left:1189px;top:8px" width="35" height="35" viewBox="0 0 35 35"><rect x="1" y="1" width="33" height="33" fill="#606876"/><path d="M1 1L34 34M34 1L1 34" stroke="#4e5562" stroke-width="1"/><path d="M16 32L30 16L34 20L20 34Z" fill="#727a87"/></svg>
<div class="rl gr" style="left:1206px;top:47px">Area</div>
<div class="rl gr" style="left:1206px;top:65px">Boundary</div>
<svg class="a" style="left:1243px;top:8px" width="35" height="35" viewBox="0 0 35 35"><rect x="1" y="1" width="33" height="33" fill="#fdd27a" stroke="#e0a94a" stroke-width="1"/><path d="M1 1L34 34M34 1L1 34M1 14h33M14 1v33" stroke="#b3843c" stroke-width="0.9"/><rect x="20" y="24" width="14" height="10" rx="5" fill="#3b4453" stroke="#e4e4e4" stroke-width="1.3"/><text x="24.5" y="32.5" font-size="8" fill="#fff" font-family="Liberation Sans" font-weight="bold">1</text></svg>
<div class="rl" style="left:1260px;top:47px">Tag</div>
<div class="rl" style="left:1260px;top:65px">Area</div>
<div class="rarr" style="left:1280px;top:61px"></div>
<svg class="a" style="left:1294px;top:8px" width="35" height="35" viewBox="0 0 35 35"><path d="M1 26L24 3L33 3L33 10L10 33L1 33Z" fill="#d8d8d8"/><path d="M4 24L24 4M8 28L28 8M14 30L32 12" stroke="#a8a8a8" stroke-width="1.5"/><path d="M5 5L29 29" stroke="#5aa9dd" stroke-width="2"/><path d="M3 3l6 1l-5 5zM31 31l-6-1l5-5z" fill="#5aa9dd"/></svg>
<div class="rl" style="left:1311px;top:47px">By</div>
<div class="rl" style="left:1311px;top:65px">Face</div>
<svg class="a" style="left:1335px;top:8px" width="35" height="35" viewBox="0 0 35 35"><rect x="0.5" y="7.5" width="9.5" height="8.5" fill="#d4d4d4"/><rect x="11" y="7.5" width="9.5" height="8.5" fill="#a9a9a9"/><rect x="21.5" y="7.5" width="10" height="8.5" fill="#d4d4d4"/><rect x="0.5" y="19" width="9.5" height="8.5" fill="#d4d4d4"/><rect x="11" y="19" width="9.5" height="8.5" fill="#a9a9a9"/><rect x="21.5" y="19" width="10" height="8.5" fill="#d4d4d4"/><path d="M16 2v31" stroke="#5aa9dd" stroke-width="1.6"/><path d="M13 5l3-4.5l3 4.5zM13 30l3 4.5l3-4.5z" fill="#5aa9dd"/></svg>
<div class="rl" style="left:1351px;top:47px">Shaft</div>
<svg class="a" style="left:1377px;top:8px" width="35" height="35" viewBox="0 0 35 35"><rect x="9" y="1" width="16" height="13" fill="#d0d0d0"/><rect x="9" y="14" width="16" height="7" fill="#a9a9a9"/><rect x="9" y="21" width="16" height="13" fill="#d0d0d0"/><path d="M1 17.5h32" stroke="#5aa9dd" stroke-width="1.6"/><path d="M5 14l-5 3.5l5 3.5zM29 14l5 3.5l-5 3.5z" fill="#5aa9dd"/></svg>
<div class="rl" style="left:1393px;top:47px">Wall</div>
<svg class="a" style="left:1419px;top:8px" width="35" height="35" viewBox="0 0 35 35"><path d="M1 5L8 2L16 22L16 28Z" fill="#d0d0d0"/><path d="M18 10L26 14L33 28L33 34L24 30Z" fill="#d0d0d0"/><path d="M17 1v33" stroke="#5aa9dd" stroke-width="2"/><path d="M13 5l4-5l4 5zM13 29l4 5l4-5z" fill="#5aa9dd"/></svg>
<div class="rl" style="left:1435px;top:47px">Vertical</div>
<svg class="a" style="left:1466px;top:8px" width="35" height="35" viewBox="0 0 35 35"><path d="M3 28L25 4L33 2L33 8L11 33L3 33Z" fill="#d0d0d0"/><path d="M10 26L10 10L30 10" stroke="#5aa9dd" stroke-width="1.6" fill="none"/><path d="M25 4L33 2" stroke="#fff" stroke-width="2"/></svg>
<div class="rl" style="left:1484px;top:47px">Dormer</div>
<svg class="a" style="left:1520px;top:8px" width="35" height="35" viewBox="0 0 35 35"><circle cx="22" cy="17" r="8" fill="#676f7c"/><path d="M14 17h16M22 9v16" stroke="#3b4453" stroke-width="2"/><path d="M1 17h8" stroke="#646b77" stroke-width="1" stroke-dasharray="2 1"/><text x="6" y="12" font-size="9" fill="#646b77" font-family="Liberation Sans">1</text></svg>
<div class="rl gr" style="left:1536px;top:47px">Level</div>
<svg class="a" style="left:1557px;top:8px" width="35" height="35" viewBox="0 0 35 35"><path d="M17 6v28M28 6v28M6 17h28M6 28h28" stroke="#e4e4e4" stroke-width="2"/><circle cx="17" cy="4" r="4" fill="#e4e4e4"/><circle cx="28" cy="4" r="4" fill="#e4e4e4"/><circle cx="4" cy="17" r="4" fill="#e4e4e4"/><circle cx="4" cy="28" r="4" fill="#e4e4e4"/></svg>
<div class="rl" style="left:1575px;top:47px">Grid</div>
<svg class="a" style="left:1606px;top:8px" width="35" height="35" viewBox="0 0 35 35"><path d="M3 10L33 1L33 24L3 33Z" fill="#58b4ec"/><path d="M3 18L33 9M3 25L33 17M11 8L11 31M18 6L18 29M26 4L26 26" stroke="#e6f2fb" stroke-width="1.5"/><path d="M1 12L3 10L3 33L1 33Z" fill="#e0e0e0"/></svg>
<div class="rl" style="left:1621px;top:47px">Set</div>
<div class="rarr" style="left:1617px;top:67px"></div>
<svg class="a" style="left:1646px;top:8px" width="35" height="35" viewBox="0 0 35 35"><path d="M1 5L26 1L26 26L1 33Z" fill="#d8d8d8"/><path d="M1 13L26 9M1 22L26 17M9 4L9 31M17 3L17 29" stroke="#3b4453" stroke-width="1.5"/><circle cx="27" cy="21" r="7" fill="#f7c85a"/><rect x="24" y="28" width="6" height="5" fill="#e4e4e4"/></svg>
<div class="rl" style="left:1664px;top:47px">Show</div>
<svg class="a" style="left:1687px;top:8px" width="35" height="35" viewBox="0 0 35 35"><path d="M5 3L33 3L28 28L1 28Z" fill="#d6d6d6" stroke="#9a9a9a" stroke-width="1.2"/><path d="M1 3h34M0 28h30" stroke="#cfcfcf" stroke-width="1"/><path d="M18 33L32 17L35 20L21 35Z" fill="#f2c94c"/><path d="M32 17l3 3l2-2l-3-3z" fill="#e85d5d"/></svg>
<div class="rl" style="left:1704px;top:47px">Ref</div>
<div class="rl" style="left:1704px;top:65px">Plane</div>
<svg class="a" style="left:1729px;top:8px" width="35" height="35" viewBox="0 0 35 35"><rect x="1" y="1" width="34" height="33" fill="#eeeeee"/><rect x="1" y="1" width="34" height="3" fill="#bdbdbd"/><path d="M10 13L19 9L27 12L27 24L18 28L10 25Z" fill="#3fbf55"/><path d="M18 16L27 12L27 24L18 28Z" fill="#2b9440"/><path d="M10 13L19 9L27 12L18 16Z" fill="#7ae08a"/></svg>
<div class="rl" style="left:1747px;top:47px">Viewer</div>
<div class="rsep" style="left:63px"></div>
<div class="rsep" style="left:654px"></div>
<div class="rsep" style="left:804px"></div>
<div class="rsep" style="left:950px"></div>
<div class="rsep" style="left:1288px"></div>
<div class="rsep" style="left:1511px"></div>
<div class="rsep" style="left:1598px"></div>
<div class="rpl" style="left:27px">Select</div>
<div class="rarr" style="left:50px;top:90px;border-left-width:5px;border-right-width:5px;border-top-width:5px"></div>
<div class="rpl" style="left:360px">Build</div>
<div class="rpl" style="left:730px">Circulation</div>
<div class="rpl" style="left:878px">Model</div>
<div class="rpl" style="left:1112px">Room &amp; Area</div>
<div class="rarr" style="left:1157px;top:90px;border-left-width:5px;border-right-width:5px;border-top-width:5px"></div>
<div class="rpl" style="left:1400px">Opening</div>
<div class="rpl" style="left:1556px">Datum</div>
<div class="rpl" style="left:1685px">Work Plane</div>
<div id="acttab" class="a"></div>
<svg class="a" style="left:296px;top:135px" width="16" height="16" viewBox="0 0 16 16"><path d="M1 8L8 2L15 8L13 8L13 15L3 15L3 8Z" fill="#8f97a3"/><rect x="6" y="10" width="3" height="5" fill="#4c5464"/></svg>
<div class="tt" style="left:320px">3D</div>
<svg class="a" style="left:432px;top:135px" width="16" height="16" viewBox="0 0 16 16"><rect x="1" y="1" width="8" height="13" fill="#9fa6b1"/><rect x="9" y="2" width="5" height="5" fill="#9fa6b1"/><rect x="6" y="6" width="9" height="9" fill="#b9bec6"/><path d="M6 9h9M6 12h9M10 6v9" stroke="#7d8590" stroke-width="0.6"/></svg>
<div class="tt" style="left:456px">1st Floor</div>
<svg class="a" style="left:568px;top:135px" width="16" height="16" viewBox="0 0 16 16"><rect x="1" y="1" width="8" height="13" fill="#9fa6b1"/><rect x="9" y="2" width="5" height="5" fill="#9fa6b1"/><rect x="6" y="6" width="9" height="9" fill="#b9bec6"/><path d="M6 9h9M6 12h9M10 6v9" stroke="#7d8590" stroke-width="0.6"/></svg>
<div class="tt" style="left:592px">1st Floor- Existing</div>
<svg class="a" style="left:722px;top:135px" width="16" height="16" viewBox="0 0 16 16"><rect x="1" y="1" width="8" height="13" fill="#9fa6b1"/><rect x="9" y="2" width="5" height="5" fill="#9fa6b1"/><rect x="6" y="6" width="9" height="9" fill="#b9bec6"/><path d="M6 9h9M6 12h9M10 6v9" stroke="#7d8590" stroke-width="0.6"/></svg>
<div class="tt" style="left:747px">1st Floor- Proposed</div>
<svg class="a" style="left:888px;top:135px" width="16" height="16" viewBox="0 0 16 16"><rect x="1" y="1" width="8" height="13" fill="#9fa6b1"/><rect x="9" y="2" width="5" height="5" fill="#9fa6b1"/><rect x="6" y="6" width="9" height="9" fill="#b9bec6"/><path d="M6 9h9M6 12h9M10 6v9" stroke="#7d8590" stroke-width="0.6"/></svg>
<div class="tt" style="left:911.5px">Foundation</div>
<svg class="a" style="left:1024px;top:135px" width="16" height="16" viewBox="0 0 16 16"><rect x="1" y="1" width="8" height="13" fill="#9fa6b1"/><rect x="9" y="2" width="5" height="5" fill="#9fa6b1"/><rect x="6" y="6" width="9" height="9" fill="#b9bec6"/><path d="M6 9h9M6 12h9M10 6v9" stroke="#7d8590" stroke-width="0.6"/></svg>
<div class="tt" style="left:1047px">Ground Floor</div>
<svg class="a" style="left:1159px;top:135px" width="16" height="16" viewBox="0 0 16 16"><rect x="1" y="1" width="8" height="13" fill="#9fa6b1"/><rect x="9" y="2" width="5" height="5" fill="#9fa6b1"/><rect x="6" y="6" width="9" height="9" fill="#b9bec6"/><path d="M6 9h9M6 12h9M10 6v9" stroke="#7d8590" stroke-width="0.6"/></svg>
<div class="tt" style="left:1183px">Ground Floor- Existing</div>
<svg class="a" style="left:1339px;top:135px" width="16" height="16" viewBox="0 0 16 16"><rect x="1" y="1" width="8" height="13" fill="#d9dde2"/><rect x="9" y="2" width="5" height="5" fill="#d9dde2"/><rect x="6" y="6" width="9" height="9" fill="#eceef0"/><path d="M6 9h9M6 12h9M10 6v9" stroke="#7d8590" stroke-width="0.6"/></svg>
<div class="tt" style="left:1363.5px;font-weight:bold;color:#f4f5f7">Ground Floor- Proposed</div>
<svg class="a" style="left:1517px;top:137px" width="11" height="11" viewBox="0 0 11 11"><path d="M1 1L10 10M10 1L1 10" stroke="#d4d8de" stroke-width="1.6"/></svg>
<svg class="a" style="left:2543px;top:137px" width="12" height="12" viewBox="0 0 12 12"><path d="M2 2h8" stroke="#d9dde2" stroke-width="1.2"/><path d="M1 5L11 5L6 10Z" fill="#d9dde2"/></svg>
<svg id="plan" width="2249" height="1186" viewBox="291 154 2249 1186"><defs><pattern id="hatch" patternUnits="userSpaceOnUse" width="8.7" height="8.7" patternTransform="rotate(45)"><rect width="8.7" height="8.7" fill="#4a3035"/><line x1="0" y1="0" x2="0" y2="8.7" stroke="#8a6b70" stroke-width="1.1"/></pattern></defs><rect x="1261.5" y="193.2" width="332" height="1135" fill="none" stroke="#cdd1d6" stroke-width="1.2"/><rect x="1320" y="211.5" width="237.00" height="237.00" fill="url(#hatch)" /><rect x="1328" y="220" width="221.00" height="220.00" fill="#e3ae76" /><rect x="1320" y="211.5" width="237" height="237" fill="none" stroke="#e7e2e2" stroke-width="0.8"/><rect x="1328" y="220" width="221" height="220" fill="none" stroke="#f7e7d2" stroke-width="0.8"/><rect x="1440" y="220" width="4.50" height="92.50" fill="#5b5b5d" fill="#5b5b5d" stroke="#f6efe6" stroke-width="0.9"/><rect x="1328" y="307.6" width="87.00" height="4.90" fill="#5b5b5d" fill="#5b5b5d" stroke="#f6efe6" stroke-width="0.9"/><rect x="1469" y="307.6" width="80.00" height="4.90" fill="#5b5b5d" fill="#5b5b5d" stroke="#f6efe6" stroke-width="0.9"/><rect x="1328" y="369.8" width="61.70" height="3.20" fill="#5b5b5d" fill="#5b5b5d" stroke="#f6efe6" stroke-width="0.9"/><rect x="1386" y="337.4" width="3.70" height="35.60" fill="#5b5b5d" fill="#5b5b5d" stroke="#f6efe6" stroke-width="0.9"/><line x1="1390" y1="316" x2="1411" y2="316" stroke="#f0e8de" stroke-width="1" /><path d="M1410.70 316.00 A21 21 0 0 1 1389.70 337.00" fill="none" stroke="#eceae6" stroke-width="0.9"/><line x1="1436" y1="287" x2="1436" y2="308" stroke="#f0e8de" stroke-width="1.2" /><line x1="1448" y1="287" x2="1448" y2="308" stroke="#f0e8de" stroke-width="1.2" /><path d="M1415.00 308.00 A21 21 0 0 1 1436.00 287.00" fill="none" stroke="#eceae6" stroke-width="0.9"/><path d="M1448.00 287.00 A21 21 0 0 1 1469.00 308.00" fill="none" stroke="#eceae6" stroke-width="0.9"/><rect x="1372" y="211.5" width="28.00" height="8.50" fill="#1f242d" /><rect x="1372" y="214.75" width="28.00" height="2.00" fill="#c9cdd2" /><rect x="1372" y="211.5" width="28" height="8.5" fill="none" stroke="#e6e8ea" stroke-width="0.8"/><rect x="1488" y="211.5" width="27.00" height="8.50" fill="#1f242d" /><rect x="1488" y="214.75" width="27.00" height="2.00" fill="#c9cdd2" /><rect x="1488" y="211.5" width="27" height="8.5" fill="none" stroke="#e6e8ea" stroke-width="0.8"/><rect x="1320" y="313" width="8.00" height="28.00" fill="#1f242d" /><rect x="1323.0" y="313" width="2.00" height="28.00" fill="#c9cdd2" /><rect x="1320" y="313" width="8" height="28" fill="none" stroke="#e6e8ea" stroke-width="0.8"/><rect x="1347" y="440" width="25.00" height="8.50" fill="#1f242d" /><rect x="1347" y="443.25" width="25.00" height="2.00" fill="#c9cdd2" /><rect x="1347" y="440" width="25" height="8.5" fill="none" stroke="#e6e8ea" stroke-width="0.8"/><rect x="1372" y="440" width="26.00" height="8.50" fill="#1f242d" /><rect x="1372" y="443.25" width="26.00" height="2.00" fill="#c9cdd2" /><rect x="1372" y="440" width="26" height="8.5" fill="none" stroke="#e6e8ea" stroke-width="0.8"/><rect x="1478" y="440" width="25.00" height="8.50" fill="#1f242d" /><rect x="1478" y="443.25" width="25.00" height="2.00" fill="#c9cdd2" /><rect x="1478" y="440" width="25" height="8.5" fill="none" stroke="#e6e8ea" stroke-width="0.8"/><rect x="1503" y="440" width="26.00" height="8.50" fill="#1f242d" /><rect x="1503" y="443.25" width="26.00" height="2.00" fill="#c9cdd2" /><rect x="1503" y="440" width="26" height="8.5" fill="none" stroke="#e6e8ea" stroke-width="0.8"/><rect x="1418" y="440" width="44.00" height="8.50" fill="#1f242d" /><line x1="1420" y1="443.5" x2="1461" y2="443.5" stroke="#e6e8ea" stroke-width="1" /><line x1="1421" y1="443.5" x2="1421" y2="463.5" stroke="#e6e8ea" stroke-width="1.2" /><line x1="1460" y1="443.5" x2="1460" y2="463.5" stroke="#e6e8ea" stroke-width="1.2" /><path d="M1421.00 463.00 A19.5 19.5 0 0 0 1440.50 443.50" fill="none" stroke="#eceae6" stroke-width="0.9"/><path d="M1460.00 463.00 A19.5 19.5 0 0 1 1440.50 443.50" fill="none" stroke="#eceae6" stroke-width="0.9"/><text x="1386" y="263" font-size="6.8" fill="#f4f0ea" text-anchor="middle" font-family="Liberation Sans" >Guest Room</text><text x="1386" y="273.5" font-size="6.8" fill="#f4f0ea" text-anchor="middle" font-family="Liberation Sans" >11.98 m²</text><text x="1492" y="263" font-size="6.8" fill="#f4f0ea" text-anchor="middle" font-family="Liberation Sans" >Guest Room</text><text x="1492" y="273.5" font-size="6.8" fill="#f4f0ea" text-anchor="middle" font-family="Liberation Sans" >11.24 m²</text><text x="1360" y="340" font-size="6.8" fill="#f4f0ea" text-anchor="middle" font-family="Liberation Sans" >WC &amp; Shower</text><text x="1360" y="350.5" font-size="6.8" fill="#f4f0ea" text-anchor="middle" font-family="Liberation Sans" >4 m²</text><text x="1465" y="370" font-size="6.8" fill="#f4f0ea" text-anchor="middle" font-family="Liberation Sans" >Children Playroom</text><text x="1465" y="380.5" font-size="6.8" fill="#f4f0ea" text-anchor="middle" font-family="Liberation Sans" >29.84 m²</text><rect x="1421.5" y="472" width="36" height="8.5" fill="#1d2a3e" stroke="#4a78b0" stroke-width="0.8"/><text x="1439.5" y="479" font-size="6.4" fill="#6a9ad6" text-anchor="middle" font-family="Liberation Sans" font-weight="bold">OUTBUILDI</text><line x1="1316" y1="204.6" x2="1562" y2="204.6" stroke="#d4d8de" stroke-width="0.9" /><line x1="1328" y1="198" x2="1328" y2="212" stroke="#d4d8de" stroke-width="0.9" /><line x1="1549" y1="198" x2="1549" y2="212" stroke="#d4d8de" stroke-width="0.9" /><line x1="1324" y1="208.6" x2="1332" y2="200.6" stroke="#d4d8de" stroke-width="0.9" /><line x1="1545" y1="208.6" x2="1553" y2="200.6" stroke="#d4d8de" stroke-width="0.9" /><rect x="1426" y="200" width="23.00" height="9.00" fill="#222833" /><text x="1437.5" y="207.6" font-size="7" fill="#d8dce2" text-anchor="middle" font-family="Liberation Sans" >7.7 m</text><line x1="1564.5" y1="216" x2="1564.5" y2="444" stroke="#d4d8de" stroke-width="0.9" /><line x1="1556" y1="220" x2="1573" y2="220" stroke="#d4d8de" stroke-width="0.9" /><line x1="1556" y1="440" x2="1573" y2="440" stroke="#d4d8de" stroke-width="0.9" /><line x1="1560.5" y1="224" x2="1568.5" y2="216" stroke="#d4d8de" stroke-width="0.9" /><line x1="1560.5" y1="444" x2="1568.5" y2="436" stroke="#d4d8de" stroke-width="0.9" /><g transform="translate(1564.5,327) rotate(-90)"><rect x="-12" y="-5" width="24.00" height="10.00" fill="#222833" /><text x="0" y="2.6" font-size="7" fill="#d8dce2" text-anchor="middle" font-family="Liberation Sans" >7.7 m</text></g><line x1="1326.7" y1="448.5" x2="1326.7" y2="624" stroke="#868c95" stroke-width="1.8" /><line x1="1326.7" y1="643" x2="1326.7" y2="826" stroke="#868c95" stroke-width="1.8" /><g transform="translate(1322.5,634) rotate(-90)"><text x="0" y="2.9" font-size="8.2" fill="#e2e5e9" text-anchor="middle" font-family="Liberation Sans" >13 m</text></g><polygon points="1320,819.3 1582,819.3 1582,1289 1563,1289 1563,1303 1531,1323.5 1500,1323.5 1470,1303 1470,1289 1273.5,1289 1273.5,1103.7 1320,1103.7" fill="url(#hatch)" stroke="#e2dcdc" stroke-width="0.8"/><rect x="1319" y="1076.4" width="58.50" height="26.80" fill="#222833" /><rect x="1401.6" y="1281.5" width="35.40" height="8.50" fill="#222833" /><rect x="1320" y="1047" width="8.00" height="20.70" fill="#222833" /><rect x="1328" y="827.4" width="50.00" height="118.60" fill="#e2630f" stroke="#f6c28a" stroke-width="0.8"/><rect x="1328" y="946" width="50.00" height="5.00" fill="#5d5d60" /><rect x="1328" y="951" width="50.00" height="85.50" fill="#4fc07e" stroke="#c8f2d8" stroke-width="0.8"/><rect x="1386.3" y="827.4" width="186.70" height="156.60" fill="#47a9d1" stroke="#bfe8f8" stroke-width="0.8"/><rect x="1386" y="984" width="187.00" height="9.00" fill="#1f242d" /><rect x="1460" y="984" width="27.00" height="9.00" fill="url(#hatch)" /><line x1="1390" y1="992" x2="1460" y2="992" stroke="#e6e8ea" stroke-width="1" stroke-dasharray="4 2"/><line x1="1487" y1="992" x2="1570" y2="992" stroke="#e6e8ea" stroke-width="1" stroke-dasharray="4 2"/><rect x="1386.3" y="993" width="186.70" height="157.00" fill="#cbcbcb" /><rect x="1328" y="1045" width="58.00" height="22.70" fill="#cbcbcb" /><rect x="1386" y="1050" width="4.00" height="17.70" fill="#cbcbcb" /><rect x="1464.3" y="993" width="7.00" height="48.00" fill="url(#hatch)" /><rect x="1471.3" y="1030" width="14.70" height="7.70" fill="url(#hatch)" /><rect x="1561" y="1030" width="12.00" height="7.70" fill="url(#hatch)" /><rect x="1565.3" y="1075" width="7.70" height="38.60" fill="url(#hatch)" /><rect x="1378" y="1079" width="8.00" height="22.00" fill="#1f242d" /><rect x="1381.0" y="1079" width="2.00" height="22.00" fill="#c9cdd2" /><rect x="1378" y="1079" width="8" height="22" fill="none" stroke="#e6e8ea" stroke-width="0.8"/><rect x="1328" y="983" width="8.00" height="12.50" fill="url(#hatch)" /><rect x="1371" y="983" width="7.00" height="12.50" fill="url(#hatch)" /><rect x="1282.8" y="1112.6" width="94.20" height="164.40" fill="#8686fb" stroke="#c9c9ff" stroke-width="0.8"/><rect x="1386" y="1117" width="78.30" height="33.00" fill="#cbcbcb" /><rect x="1386" y="1150" width="64.50" height="99.00" fill="#cbcbcb" /><rect x="1386" y="1258" width="61.00" height="23.00" fill="#cbcbcb" /><rect x="1386" y="1112" width="42.50" height="5.00" fill="url(#hatch)" /><rect x="1452" y="1112" width="19.00" height="5.00" fill="url(#hatch)" /><rect x="1464.3" y="1112" width="6.70" height="38.00" fill="url(#hatch)" /><rect x="1428.5" y="1112" width="23.50" height="5.00" fill="#cbcbcb" /><rect x="1450.5" y="1150" width="130.50" height="8.30" fill="url(#hatch)" /><rect x="1450.5" y="1158" width="5.20" height="5.80" fill="url(#hatch)" /><rect x="1450.5" y="1187" width="5.20" height="94.00" fill="url(#hatch)" /><rect x="1450.5" y="1163.8" width="5.20" height="23.20" fill="#cbcbcb" /><rect x="1386" y="1249" width="61.00" height="9.00" fill="url(#hatch)" /><rect x="1390" y="1251" width="19.00" height="5.00" fill="#1f242d" /><rect x="1410" y="1251" width="35.00" height="5.00" fill="#1f242d" /><polygon points="1455.7,1158.3 1573,1158.3 1573,1203 1565,1203 1565,1241 1573,1241 1573,1281 1554,1281 1554,1298 1529,1315 1503,1315 1478,1298 1478,1281 1455.7,1281" fill="#cbcbcb" /><path d="M1472 1301 L1500 1320 M1532 1320 L1560 1301" stroke="#1f242d" stroke-width="6" fill="none"/><path d="M1472 1301 L1500 1320 M1532 1320 L1560 1301" stroke="#b8bcc2" stroke-width="1.2" fill="none"/><rect x="1503" y="1316" width="26.00" height="6.00" fill="#1f242d" /><line x1="1503" y1="1318.5" x2="1529" y2="1318.5" stroke="#b8bcc2" stroke-width="1.2" /><line x1="1388" y1="1141" x2="1410" y2="1141" stroke="#f4f4f4" stroke-width="1.2" stroke-dasharray="4 3"/><line x1="1388" y1="1149" x2="1410" y2="1149" stroke="#f4f4f4" stroke-width="1.2" stroke-dasharray="4 3"/><line x1="1388" y1="1157" x2="1410" y2="1157" stroke="#f4f4f4" stroke-width="1.2" stroke-dasharray="4 3"/><line x1="1388" y1="1164" x2="1410" y2="1164" stroke="#f4f4f4" stroke-width="1.2" stroke-dasharray="4 3"/><line x1="1388" y1="1172" x2="1410" y2="1172" stroke="#f4f4f4" stroke-width="1.2" stroke-dasharray="4 3"/><line x1="1410" y1="1118" x2="1410" y2="1142" stroke="#f4f4f4" stroke-width="1" stroke-dasharray="4 3"/><line x1="1418" y1="1118" x2="1418" y2="1142" stroke="#f4f4f4" stroke-width="1" stroke-dasharray="4 3"/><line x1="1427" y1="1118" x2="1427" y2="1142" stroke="#f4f4f4" stroke-width="1" stroke-dasharray="4 3"/><rect x="1387" y="1181" width="23.00" height="36.00" fill="#8e8e8e" /><rect x="1411" y="1200" width="7.00" height="17.00" fill="#8e8e8e" /><rect x="1419" y="1200" width="6.00" height="17.00" fill="#8e8e8e" /><line x1="1387" y1="1220" x2="1428" y2="1220" stroke="#f0f0f0" stroke-width="0.8" /><line x1="1428" y1="1198" x2="1428" y2="1220" stroke="#f0f0f0" stroke-width="0.8" /><line x1="1409" y1="1233" x2="1409" y2="1252" stroke="#f0f0f0" stroke-width="1" /><path d="M1409.00 1233.00 A19 19 0 0 1 1428.00 1252.00" fill="none" stroke="#eceae6" stroke-width="0.9"/><path d="M1452.50 1117.00 A24 24 0 0 1 1428.50 1141.00" fill="none" stroke="#eceae6" stroke-width="0.9"/><line x1="1455.7" y1="1166" x2="1475" y2="1166" stroke="#f0f0f0" stroke-width="1" /><path d="M1475.70 1166.00 A20 20 0 0 1 1455.70 1186.00" fill="none" stroke="#eceae6" stroke-width="0.9"/><rect x="1343.6" y="1036.5" width="18.00" height="8.50" fill="#1f242d" /><line x1="1343" y1="1036.5" x2="1343" y2="1020" stroke="#f0f0f0" stroke-width="1" /><path d="M1343.00 1019.50 A17 17 0 0 1 1360.00 1036.50" fill="none" stroke="#eceae6" stroke-width="0.9"/><rect x="1341" y="819.3" width="23.70" height="8.10" fill="#1f242d" /><line x1="1343" y1="804" x2="1343" y2="822" stroke="#dfe2e6" stroke-width="1.4" /><path d="M1343.00 802.00 A20 20 0 0 1 1363.00 822.00" fill="none" stroke="#eceae6" stroke-width="0.9"/><rect x="1378" y="832" width="8.30" height="19.00" fill="#1f242d" /><line x1="1360" y1="832.5" x2="1386" y2="832.5" stroke="#f0e0d0" stroke-width="1" /><line x1="1378" y1="851" x2="1386.3" y2="851" stroke="#f0e0d0" stroke-width="1" /><path d="M1360.00 832.00 A18 18 0 0 0 1378.00 850.00" fill="none" stroke="#eceae6" stroke-width="0.9"/><line x1="1302" y1="1066" x2="1320" y2="1066" stroke="#f0f0f0" stroke-width="1" /><path d="M1302.00 1066.00 A18 18 0 0 1 1320.00 1048.00" fill="none" stroke="#eceae6" stroke-width="0.9"/><rect x="1284.8" y="1103.7" width="21.70" height="8.90" fill="#1f242d" /><line x1="1286" y1="1083" x2="1286" y2="1104" stroke="#f0f0f0" stroke-width="1" /><path d="M1286.00 1084.00 A20 20 0 0 1 1306.00 1104.00" fill="none" stroke="#eceae6" stroke-width="0.9"/><rect x="1306.5" y="1103.7" width="67.50" height="8.90" fill="#1f242d" /><rect x="1306.5" y="1107.15" width="67.50" height="2.00" fill="#c9cdd2" /><rect x="1306.5" y="1103.7" width="67.5" height="8.899999999999864" fill="none" stroke="#e6e8ea" stroke-width="0.8"/><rect x="1299.6" y="1277.5" width="63.40" height="11.50" fill="#1f242d" /><rect x="1299.6" y="1282.25" width="63.40" height="2.00" fill="#c9cdd2" /><rect x="1299.6" y="1277.5" width="63.40000000000009" height="11.5" fill="none" stroke="#e6e8ea" stroke-width="0.8"/><rect x="1320" y="872" width="8.00" height="29.00" fill="#1f242d" /><rect x="1323.0" y="872" width="2.00" height="29.00" fill="#c9cdd2" /><rect x="1320" y="872" width="8" height="29" fill="none" stroke="#e6e8ea" stroke-width="0.8"/><rect x="1320" y="1013" width="8.00" height="22.00" fill="#1f242d" /><rect x="1323.0" y="1013" width="2.00" height="22.00" fill="#c9cdd2" /><rect x="1320" y="1013" width="8" height="22" fill="none" stroke="#e6e8ea" stroke-width="0.8"/><rect x="1400" y="819.3" width="69.00" height="8.10" fill="#1f242d" /><rect x="1490" y="819.3" width="68.00" height="8.10" fill="#1f242d" /><line x1="1400" y1="824" x2="1469" y2="824" stroke="#eeeeee" stroke-width="1.2" /><line x1="1490" y1="824" x2="1558" y2="824" stroke="#eeeeee" stroke-width="1.2" /><path d="M1401 822 L1417 805 M1434 822 L1451 805 L1468 822 M1491 822 L1507 805 M1524 822 L1541 805 L1557 822" stroke="#9ea3a9" stroke-width="2.4" fill="none"/><line x1="1388" y1="835" x2="1572" y2="835" stroke="#c9f0ff" stroke-width="0.9" /><line x1="1568" y1="829" x2="1568" y2="982" stroke="#c9f0ff" stroke-width="0.9" /><line x1="1334" y1="829" x2="1334" y2="945" stroke="#ffd2a6" stroke-width="0.8" /><line x1="1329" y1="943" x2="1377" y2="943" stroke="#ffd2a6" stroke-width="0.8" /><line x1="1329" y1="956" x2="1377" y2="956" stroke="#d2ffe2" stroke-width="0.8" /><line x1="1282" y1="1275" x2="1377" y2="1275" stroke="#dcdcff" stroke-width="0.8" /><line x1="1370" y1="1113" x2="1370" y2="1276" stroke="#dcdcff" stroke-width="0.8" /><line x1="1388" y1="989" x2="1572" y2="989" stroke="#b8bcc2" stroke-width="0.8" /><rect x="1438.5" y="830.75" width="23.00" height="8.50" fill="#1c2129" /><text x="1450" y="837.65" font-size="7" fill="#f2f4f6" text-anchor="middle" font-family="Liberation Sans" >8.56 m</text><g transform="translate(1566.5,906) rotate(-90)"><rect x="-10.0" y="-4.5" width="20.00" height="9.00" fill="#1c2129" /><text x="0" y="2.9" font-size="7" fill="#f2f4f6" text-anchor="middle" font-family="Liberation Sans" >5.5 m</text></g><g transform="translate(1334,887.5) rotate(-90)"><rect x="-10.0" y="-4.0" width="20.00" height="8.00" fill="#1c2129" /><text x="0" y="2.4" font-size="6.5" fill="#f2f4f6" text-anchor="middle" font-family="Liberation Sans" >4.17 m</text></g><rect x="1341.2" y="939.0" width="21.00" height="8.00" fill="#1c2129" /><text x="1351.7" y="945.4" font-size="6" fill="#f2f4f6" text-anchor="middle" font-family="Liberation Sans" >1.72 m</text><rect x="1341.2" y="951.7" width="21.00" height="8.00" fill="#1c2129" /><text x="1351.7" y="958.1" font-size="6" fill="#f2f4f6" text-anchor="middle" font-family="Liberation Sans" >1.72 m</text><g transform="translate(1333.5,998.5) rotate(-90)"><rect x="-5.5" y="-3.5" width="11.00" height="7.00" fill="#1c2129" /><text x="0" y="1.9" font-size="6" fill="#f2f4f6" text-anchor="middle" font-family="Liberation Sans" >3 m</text></g><rect x="1413.5" y="985.5" width="19.00" height="7.00" fill="#1c2129" /><text x="1423" y="990.9" font-size="6" fill="#f2f4f6" text-anchor="middle" font-family="Liberation Sans" >2.6 m</text><rect x="1512.5" y="985.5" width="19.00" height="7.00" fill="#1c2129" /><text x="1522" y="990.9" font-size="6" fill="#f2f4f6" text-anchor="middle" font-family="Liberation Sans" >2.6 m</text><g transform="translate(1369.5,1196) rotate(-90)"><rect x="-11.5" y="-4.0" width="23.00" height="8.00" fill="#1c2129" /><text x="0" y="2.4" font-size="7" fill="#f2f4f6" text-anchor="middle" font-family="Liberation Sans" >5.93 m</text></g><rect x="1320.0" y="1272.5" width="17.00" height="7.00" fill="#1c2129" /><text x="1328.5" y="1277.9" font-size="6" fill="#f2f4f6" text-anchor="middle" font-family="Liberation Sans" >3.34 m</text><text x="1358" y="890" font-size="5.6" fill="#f4f0ea" text-anchor="middle" font-family="Liberation Sans" >UTILITY ROOM</text><text x="1358" y="897" font-size="5.6" fill="#f4f0ea" text-anchor="middle" font-family="Liberation Sans" >7.17 m²</text><text x="1479" y="904.5" font-size="7" fill="#f4f0ea" text-anchor="middle" font-family="Liberation Sans" >KITCHEN EXTENSION</text><text x="1479" y="914.5" font-size="7" fill="#f4f0ea" text-anchor="middle" font-family="Liberation Sans" >35.94 m²</text><text x="1354" y="987.5" font-size="7" fill="#f4f0ea" text-anchor="middle" font-family="Liberation Sans" >WC</text><text x="1354" y="997.5" font-size="7" fill="#f4f0ea" text-anchor="middle" font-family="Liberation Sans" >5 m²</text><text x="1484" y="1073.5" font-size="6.9" fill="#f6f6f6" text-anchor="middle" font-family="Liberation Sans" >KITCHEN &amp; DINING</text><text x="1484" y="1083.5" font-size="6.9" fill="#f6f6f6" text-anchor="middle" font-family="Liberation Sans" >32.03 m²</text><text x="1331" y="1192.5" font-size="7.1" fill="#ececff" text-anchor="middle" font-family="Liberation Sans" >GARAGE</text><text x="1331" y="1202.5" font-size="7.1" fill="#ececff" text-anchor="middle" font-family="Liberation Sans" >19.81 m²</text><text x="1432" y="1177.5" font-size="6.9" fill="#f6f6f6" text-anchor="middle" font-family="Liberation Sans" >CORRIDOR</text><text x="1432" y="1187.5" font-size="6.9" fill="#f6f6f6" text-anchor="middle" font-family="Liberation Sans" >10.87 m²</text><text x="1511.5" y="1220.5" font-size="6.9" fill="#f6f6f6" text-anchor="middle" font-family="Liberation Sans" >RECEPTION</text><text x="1511.5" y="1230.5" font-size="6.9" fill="#f6f6f6" text-anchor="middle" font-family="Liberation Sans" >19.84 m²</text><circle cx="1546.7" cy="639" r="32.5" fill="none" stroke="#e2e4e8" stroke-width="1.6"/><polygon points="1562.7,611.4 1517,649.7 1550.4,670.4" fill="#d0d0d0"/><text x="1567.8" y="608.3" font-size="25.5" font-weight="bold" fill="#f2f2f2" text-anchor="middle" font-family="Liberation Sans" transform="translate(1567.8 0) scale(0.68 1) translate(-1567.8 0)">N</text></svg>
<div id="pb" class="a"></div>
<div id="pbtitle" class="a"></div>
<div id="pbtt" class="a">Project Browser - 0015-15 Mashiters Walk,Ro...</div>
<svg class="a" style="left:578px;top:716px" width="11" height="11" viewBox="0 0 11 11"><path d="M1 1L10 10M10 1L1 10" stroke="#e3e6ea" stroke-width="1.8"/></svg>
<div id="pbhome" class="a"></div>
<div id="pbtool" class="a"></div>
<svg class="a" style="left:313px;top:735px" width="20" height="20" viewBox="0 0 20 20"><path d="M2 10L10 3L18 10" stroke="#e6e6e6" stroke-width="2" fill="none"/><rect x="4" y="10" width="12" height="9" fill="#e6e6e6"/><rect x="8" y="12" width="3" height="7" fill="#d8c060"/><rect x="13" y="13" width="7" height="2" fill="#8ec6ef"/><rect x="13" y="17" width="7" height="2" fill="#8ec6ef"/></svg>
<svg class="a" style="left:338px;top:735px" width="20" height="20" viewBox="0 0 20 20"><path d="M1 5V1H5M15 1H19V5M19 15V19H15M5 19H1V15" stroke="#d8d8d8" stroke-width="1.6" fill="none"/><path d="M6 8L11 5L15 7L15 13L10 16L6 14Z" fill="#e0e0e0"/></svg>
<svg class="a" style="left:364px;top:735px" width="20" height="20" viewBox="0 0 20 20"><rect x="1" y="1" width="18" height="18" fill="#f2f2f2"/><rect x="1" y="1" width="18" height="3" fill="#bdbdbd"/><path d="M4 7h3v3H4zM4 12h3v3H4z" fill="none" stroke="#555" stroke-width="0.8"/><path d="M9 8h8M9 10h6M9 13h8M9 15h6" stroke="#666" stroke-width="1"/></svg>
<svg class="a" style="left:389px;top:735px" width="20" height="20" viewBox="0 0 20 20"><rect x="1" y="3" width="18" height="14" fill="none" stroke="#e8e8e8" stroke-width="1.5"/><path d="M1 8h18M1 12.5h18M6 3v14M11 3v14" stroke="#e8e8e8" stroke-width="1.3"/></svg>
<svg class="a" style="left:415px;top:735px" width="20" height="20" viewBox="0 0 20 20"><path d="M2 17L6 5L15 5L19 14L17 17Z" fill="#e6e6e6"/><path d="M15 5Q19 9 17 17" stroke="#999" stroke-width="1" fill="none"/></svg>
<svg class="a" style="left:440px;top:735px" width="20" height="20" viewBox="0 0 20 20"><rect x="2" y="2" width="16" height="16" fill="#e8e8e8"/><rect x="2" y="2" width="8" height="8" fill="#1b1f27"/><rect x="3" y="3" width="6" height="6" fill="#cfcfcf"/></svg>
<svg class="a" style="left:466px;top:735px" width="20" height="20" viewBox="0 0 20 20"><path d="M5 1H1V19H5M15 1H19V19H15" stroke="#cfcfcf" stroke-width="1.6" fill="none"/><circle cx="8" cy="8" r="4" fill="#e0e0e0"/><rect x="7" y="8" width="9" height="9" fill="#e6e6e6"/></svg>
<svg class="a" style="left:491px;top:735px" width="20" height="20" viewBox="0 0 20 20"><path d="M4 14L9 9M8 16Q3 18 2 14Q2 11 6 9M12 4Q17 2 18 6Q18 9 14 11M9 13L13 9" stroke="#d6a76a" stroke-width="1.7" fill="none"/></svg>
<div id="pbsearch" class="a"></div>
<svg class="a" style="left:326px;top:771px" width="18" height="18" viewBox="0 0 18 18"><circle cx="7" cy="7" r="5.5" fill="none" stroke="#a9b0bb" stroke-width="1.6"/><path d="M11 11L16 16" stroke="#a9b0bb" stroke-width="2"/></svg>
<div id="pbst" class="a">Search</div>
<div id="pbsel" class="a"></div>
<svg class="a" style="left:305px;top:800px" width="270" height="520" viewBox="305 800 270 520"><g stroke="#586173" stroke-width="1" stroke-dasharray="1.5 1.5" fill="none"><path d="M319 818 V1320"/><path d="M319 832.5 H332 M319 854 H332 M319 1151 H332 M319 1172 H332 M319 1214 H332 M319 1235.5 H332"/><path d="M336 862 V1129.5 M336 875 H365 M336 896 H365 M336 917.5 H365 M336 938.5 H365 M336 960 H365 M336 981 H365 M336 1002 H365 M336 1023 H365 M336 1044.5 H365 M336 1066 H365 M336 1087 H365 M336 1108 H365 M336 1129.5 H365"/><path d="M336 1180 V1193.5 H365"/><path d="M336 1243 V1320 M336 1257 H365 M336 1278 H365 M336 1299.5 H365"/></g></svg>
<div class="a" style="left:0;top:0;width:600px;height:1320px;overflow:hidden">
<svg class="a" style="left:314px;top:810.3px" width="9" height="3"><rect width="9" height="2" fill="#c8ccd2"/></svg>
<svg class="a" style="left:331px;top:802.3px" width="18" height="18" viewBox="0 0 18 18"><path d="M1 5V1H5M13 1H17V5M17 13V17H13M5 17H1V13" stroke="#cfd3d8" stroke-width="1.5" fill="none"/><path d="M5 7L10 4L13 6L13 12L8 15L5 13Z" fill="#e0e0e0"/></svg>
<div class="pbr" style="left:353px;top:803.3px">Views (all)</div>
<svg class="a" style="left:331px;top:827.5px" width="10" height="10"><path d="M0 5H10M5 0V10" stroke="#d0d4da" stroke-width="1.8"/></svg>
<div class="pbr" style="left:349px;top:824.5px">Structural Plans</div>
<svg class="a" style="left:331px;top:852.7px" width="10" height="3"><rect width="10" height="2" fill="#d0d4da"/></svg>
<div class="pbr" style="left:349px;top:845.7px">Floor Plans</div>
<svg class="a" style="left:366px;top:866.3399999999999px" width="17" height="17" viewBox="0 0 17 17"><rect x="1.5" y="1.5" width="14" height="14" fill="none" stroke="#d6d9de" stroke-width="1.2" stroke-dasharray="3 1.5"/><rect x="3.5" y="3.5" width="10" height="10" fill="none" stroke="#c8ccd2" stroke-width="1"/></svg>
<div class="pbr" style="left:387px;top:866.8px;">1st Floor</div>
<svg class="a" style="left:366px;top:887.52px" width="17" height="17" viewBox="0 0 17 17"><rect x="1.5" y="1.5" width="14" height="14" fill="none" stroke="#d6d9de" stroke-width="1.2" stroke-dasharray="3 1.5"/><rect x="3.5" y="3.5" width="10" height="10" fill="none" stroke="#c8ccd2" stroke-width="1"/><rect x="4" y="4" width="9" height="9" fill="#a8d4f7"/></svg>
<div class="pbr" style="left:387px;top:888.0px;">1st Floor- Existing</div>
<svg class="a" style="left:366px;top:908.6999999999999px" width="17" height="17" viewBox="0 0 17 17"><rect x="1.5" y="1.5" width="14" height="14" fill="none" stroke="#d6d9de" stroke-width="1.2" stroke-dasharray="3 1.5"/><rect x="3.5" y="3.5" width="10" height="10" fill="none" stroke="#c8ccd2" stroke-width="1"/><rect x="4" y="4" width="9" height="9" fill="#a8d4f7"/></svg>
<div class="pbr" style="left:387px;top:909.2px;">1st Floor- Proposed</div>
<svg class="a" style="left:366px;top:929.88px" width="17" height="17" viewBox="0 0 17 17"><rect x="1.5" y="1.5" width="14" height="14" fill="none" stroke="#d6d9de" stroke-width="1.2" stroke-dasharray="3 1.5"/><rect x="3.5" y="3.5" width="10" height="10" fill="none" stroke="#c8ccd2" stroke-width="1"/></svg>
<div class="pbr" style="left:387px;top:930.4px;">Foundation</div>
<svg class="a" style="left:366px;top:951.06px" width="17" height="17" viewBox="0 0 17 17"><rect x="1.5" y="1.5" width="14" height="14" fill="none" stroke="#d6d9de" stroke-width="1.2" stroke-dasharray="3 1.5"/><rect x="3.5" y="3.5" width="10" height="10" fill="none" stroke="#c8ccd2" stroke-width="1"/></svg>
<div class="pbr" style="left:387px;top:951.6px;">Ground Floor</div>
<svg class="a" style="left:366px;top:972.24px" width="17" height="17" viewBox="0 0 17 17"><rect x="1.5" y="1.5" width="14" height="14" fill="none" stroke="#d6d9de" stroke-width="1.2" stroke-dasharray="3 1.5"/><rect x="3.5" y="3.5" width="10" height="10" fill="none" stroke="#c8ccd2" stroke-width="1"/><rect x="4" y="4" width="9" height="9" fill="#a8d4f7"/></svg>
<div class="pbr" style="left:387px;top:972.7px;">Ground Floor- Existing</div>
<svg class="a" style="left:366px;top:993.42px" width="17" height="17" viewBox="0 0 17 17"><rect x="1.5" y="1.5" width="14" height="14" fill="none" stroke="#d6d9de" stroke-width="1.2" stroke-dasharray="3 1.5"/><rect x="3.5" y="3.5" width="10" height="10" fill="none" stroke="#c8ccd2" stroke-width="1"/><rect x="4" y="4" width="9" height="9" fill="#a8d4f7"/></svg>
<div class="pbr" style="left:387px;top:993.9px;font-weight:bold;color:#f4f5f7;">Ground Floor- Proposed</div>
<svg class="a" style="left:366px;top:1014.5999999999999px" width="17" height="17" viewBox="0 0 17 17"><rect x="1.5" y="1.5" width="14" height="14" fill="none" stroke="#d6d9de" stroke-width="1.2" stroke-dasharray="3 1.5"/><rect x="3.5" y="3.5" width="10" height="10" fill="none" stroke="#c8ccd2" stroke-width="1"/></svg>
<div class="pbr" style="left:387px;top:1015.1px;">Loft</div>
<svg class="a" style="left:366px;top:1035.78px" width="17" height="17" viewBox="0 0 17 17"><rect x="1.5" y="1.5" width="14" height="14" fill="none" stroke="#d6d9de" stroke-width="1.2" stroke-dasharray="3 1.5"/><rect x="3.5" y="3.5" width="10" height="10" fill="none" stroke="#c8ccd2" stroke-width="1"/><rect x="4" y="4" width="9" height="9" fill="#a8d4f7"/></svg>
<div class="pbr" style="left:387px;top:1036.3px;">Loft- Existing</div>
<svg class="a" style="left:366px;top:1056.96px" width="17" height="17" viewBox="0 0 17 17"><rect x="1.5" y="1.5" width="14" height="14" fill="none" stroke="#d6d9de" stroke-width="1.2" stroke-dasharray="3 1.5"/><rect x="3.5" y="3.5" width="10" height="10" fill="none" stroke="#c8ccd2" stroke-width="1"/><rect x="4" y="4" width="9" height="9" fill="#a8d4f7"/></svg>
<div class="pbr" style="left:387px;top:1057.5px;">Loft- Proposed</div>
<svg class="a" style="left:366px;top:1078.1399999999999px" width="17" height="17" viewBox="0 0 17 17"><rect x="1.5" y="1.5" width="14" height="14" fill="none" stroke="#d6d9de" stroke-width="1.2" stroke-dasharray="3 1.5"/><rect x="3.5" y="3.5" width="10" height="10" fill="none" stroke="#c8ccd2" stroke-width="1"/></svg>
<div class="pbr" style="left:387px;top:1078.6px;">Roof</div>
<svg class="a" style="left:366px;top:1099.32px" width="17" height="17" viewBox="0 0 17 17"><rect x="1.5" y="1.5" width="14" height="14" fill="none" stroke="#d6d9de" stroke-width="1.2" stroke-dasharray="3 1.5"/><rect x="3.5" y="3.5" width="10" height="10" fill="none" stroke="#c8ccd2" stroke-width="1"/></svg>
<div class="pbr" style="left:387px;top:1099.8px;">Site</div>
<svg class="a" style="left:366px;top:1120.5px" width="17" height="17" viewBox="0 0 17 17"><rect x="1.5" y="1.5" width="14" height="14" fill="none" stroke="#d6d9de" stroke-width="1.2" stroke-dasharray="3 1.5"/><rect x="3.5" y="3.5" width="10" height="10" fill="none" stroke="#c8ccd2" stroke-width="1"/></svg>
<div class="pbr" style="left:387px;top:1121.0px;">TOF</div>
<svg class="a" style="left:331px;top:1145.2px" width="10" height="10"><path d="M0 5H10M5 0V10" stroke="#d0d4da" stroke-width="1.8"/></svg>
<div class="pbr" style="left:349px;top:1142.2px">Ceiling Plans</div>
<svg class="a" style="left:331px;top:1170.4px" width="10" height="3"><rect width="10" height="2" fill="#d0d4da"/></svg>
<div class="pbr" style="left:349px;top:1163.4px">3D Views</div>
<svg class="a" style="left:366px;top:1184.04px" width="17" height="17" viewBox="0 0 17 17"><rect x="1.5" y="1.5" width="14" height="14" fill="none" stroke="#d6d9de" stroke-width="1.2" stroke-dasharray="3 1.5"/><rect x="3.5" y="3.5" width="10" height="10" fill="none" stroke="#c8ccd2" stroke-width="1"/></svg>
<div class="pbr" style="left:387px;top:1184.5px;">3D</div>
<svg class="a" style="left:331px;top:1208.7px" width="10" height="10"><path d="M0 5H10M5 0V10" stroke="#d0d4da" stroke-width="1.8"/></svg>
<div class="pbr" style="left:349px;top:1205.7px">Elevations (Building Elevation)</div>
<svg class="a" style="left:331px;top:1233.9px" width="10" height="3"><rect width="10" height="2" fill="#d0d4da"/></svg>
<div class="pbr" style="left:349px;top:1226.9px">Sections (Building Section)</div>
<svg class="a" style="left:366px;top:1247.58px" width="17" height="17" viewBox="0 0 17 17"><rect x="1.5" y="1.5" width="14" height="14" fill="none" stroke="#d6d9de" stroke-width="1.2" stroke-dasharray="3 1.5"/><rect x="3.5" y="3.5" width="10" height="10" fill="none" stroke="#c8ccd2" stroke-width="1"/></svg>
<div class="pbr" style="left:387px;top:1248.1px;">Back Elevation-Proposed</div>
<svg class="a" style="left:366px;top:1268.76px" width="17" height="17" viewBox="0 0 17 17"><rect x="1.5" y="1.5" width="14" height="14" fill="none" stroke="#d6d9de" stroke-width="1.2" stroke-dasharray="3 1.5"/><rect x="3.5" y="3.5" width="10" height="10" fill="none" stroke="#c8ccd2" stroke-width="1"/></svg>
<div class="pbr" style="left:387px;top:1269.3px;">Existing Elevation</div>
<svg class="a" style="left:366px;top:1289.94px" width="17" height="17" viewBox="0 0 17 17"><rect x="1.5" y="1.5" width="14" height="14" fill="none" stroke="#d6d9de" stroke-width="1.2" stroke-dasharray="3 1.5"/><rect x="3.5" y="3.5" width="10" height="10" fill="none" stroke="#c8ccd2" stroke-width="1"/><rect x="4" y="4" width="9" height="9" fill="#a8d4f7"/></svg>
<div class="pbr" style="left:387px;top:1290.4px;">Front Elevation- Existing</div>
<svg class="a" style="left:366px;top:1311.12px" width="17" height="17" viewBox="0 0 17 17"><rect x="1.5" y="1.5" width="14" height="14" fill="none" stroke="#d6d9de" stroke-width="1.2" stroke-dasharray="3 1.5"/><rect x="3.5" y="3.5" width="10" height="10" fill="none" stroke="#c8ccd2" stroke-width="1"/><rect x="4" y="4" width="9" height="9" fill="#a8d4f7"/></svg>
<div class="pbr" style="left:387px;top:1311.6px;">Front Elevation- Proposed</div>
</div>
<div id="pbsb" class="a"></div>
<svg class="a" style="left:576px;top:804px" width="13" height="9" viewBox="0 0 13 9"><path d="M2 7L6.5 2.5L11 7" stroke="#8b94a3" stroke-width="2" fill="none"/></svg>
<div id="pbthumb" class="a"></div>
<svg class="a" style="left:576px;top:1306px" width="13" height="9" viewBox="0 0 13 9"><path d="M2 2L6.5 6.5L11 2" stroke="#b4bac4" stroke-width="2" fill="none"/></svg>
<div id="vcb" class="a"></div>
<div id="vcbt" class="a">1 : 100</div>
<svg class="a" style="left:380px;top:1340px" width="19" height="19" viewBox="0 0 19 19"><rect x="1" y="3" width="17" height="13" fill="#aeb2b8"/><path d="M1 7h17M1 11h17M5 3v13M9 3v13M13 3v13" stroke="#8b9096" stroke-width="1"/></svg>
<svg class="a" style="left:407px;top:1340px" width="19" height="19" viewBox="0 0 19 19"><path d="M2 5L7 2L17 2L17 14L12 17L2 17Z" fill="#5aa7e0"/><path d="M2 5L12 5L17 2M12 5V17" stroke="#b7dcf6" stroke-width="1" fill="none"/></svg>
<svg class="a" style="left:433px;top:1340px" width="19" height="19" viewBox="0 0 19 19"><circle cx="7" cy="8" r="4" fill="#f2c55a"/><path d="M7 1v2M1 8h2M2.5 3.5l1.5 1.5M11.5 3.5L10 5" stroke="#f2c55a" stroke-width="1.3"/><circle cx="13" cy="12" r="4" fill="#3fc6d2"/><rect x="11.5" y="15" width="3" height="3" fill="#e6e6e6"/></svg>
<svg class="a" style="left:460px;top:1340px" width="19" height="19" viewBox="0 0 19 19"><circle cx="7" cy="7" r="6" fill="#d0d0d0"/><ellipse cx="7" cy="16" rx="6" ry="1.5" fill="#111"/><circle cx="13" cy="12" r="4" fill="#3fc6d2"/><rect x="11.5" y="15" width="3" height="3" fill="#e6e6e6"/></svg>
<svg class="a" style="left:487px;top:1340px" width="19" height="19" viewBox="0 0 19 19"><path d="M5 17V8H15V4" stroke="#d6d6d6" stroke-width="2" fill="none"/><path d="M10 13H14V10" stroke="#5aa7e0" stroke-width="1.6" fill="none"/><circle cx="15" cy="2" r="1" fill="#5aa7e0"/><path d="M1 14h2" stroke="#5aa7e0" stroke-width="1.3"/></svg>
<svg class="a" style="left:514px;top:1340px" width="19" height="19" viewBox="0 0 19 19"><path d="M5 17V8H15V4" stroke="#d6d6d6" stroke-width="2" fill="none"/><circle cx="13" cy="12" r="4" fill="#f2c55a"/><rect x="11.5" y="15" width="3" height="3" fill="#e6e6e6"/><path d="M1 14h2" stroke="#5aa7e0" stroke-width="1.3"/></svg>
<svg class="a" style="left:540px;top:1340px" width="19" height="19" viewBox="0 0 19 19"><circle cx="5" cy="11" r="3.5" fill="none" stroke="#c8ccd2" stroke-width="1.5"/><circle cx="14" cy="11" r="3.5" fill="none" stroke="#c8ccd2" stroke-width="1.5"/><path d="M8.5 11h2M3 7l2-3M16 7l-2-3" stroke="#c8ccd2" stroke-width="1.3"/></svg>
<svg class="a" style="left:567px;top:1340px" width="19" height="19" viewBox="0 0 19 19"><circle cx="9" cy="8" r="5" fill="#3fc6d2"/><rect x="7" y="12" width="4" height="4" fill="#e6e6e6"/></svg>
<svg class="a" style="left:594px;top:1340px" width="19" height="19" viewBox="0 0 19 19"><rect x="2" y="3" width="10" height="10" fill="#cfd2d6"/><path d="M5 6h4M5 9h4" stroke="#777" stroke-width="1"/><path d="M10 10l5 5M15 10v5h-5" stroke="#d6d6d6" stroke-width="1.2" stroke-dasharray="1.5 1" fill="none"/></svg>
<svg class="a" style="left:621px;top:1340px" width="19" height="19" viewBox="0 0 19 19"><path d="M2 17V6L8 2L16 6V13" stroke="#cfd2d6" stroke-width="1.2" fill="none"/><path d="M4 8v9M7 8v9M10 8v9" stroke="#e05a6a" stroke-width="1"/><circle cx="14" cy="12" r="4" fill="#f2c55a"/><rect x="12.5" y="15" width="3" height="3" fill="#e6e6e6"/></svg>
<svg class="a" style="left:648px;top:1340px" width="19" height="19" viewBox="0 0 19 19"><path d="M2 3v14M17 3v8M2 6h15" stroke="#d6d6d6" stroke-width="1.3" fill="none"/><path d="M2 13h9" stroke="#d6d6d6" stroke-width="1" stroke-dasharray="1.5 1.5"/><circle cx="14" cy="13" r="4" fill="#3fc6d2"/><rect x="12.5" y="16" width="3" height="3" fill="#e6e6e6"/></svg>
<svg class="a" style="left:674px;top:1343px" width="9" height="13" viewBox="0 0 9 13"><path d="M7 1.5L2 6.5L7 11.5" stroke="#8b94a3" stroke-width="1.8" fill="none"/></svg>
<div id="hthumb" class="a"></div>
<div class="a" style="left:2522px;top:1341px;width:1px;height:17px;background:#454d5b"></div><svg class="a" style="left:2526px;top:1342px" width="10" height="14" viewBox="0 0 10 14"><path d="M2 2L7 7L2 12" stroke="#a3abb7" stroke-width="1.8" fill="none"/></svg>
<svg class="a" style="left:2546px;top:1345px" width="12" height="12" viewBox="0 0 12 12"><circle cx="9" cy="4" r="1.4" fill="#8b94a3"/><circle cx="9" cy="8.5" r="1.4" fill="#8b94a3"/><circle cx="4.5" cy="8.5" r="1.4" fill="#8b94a3"/></svg>
<svg class="a" style="left:2543px;top:159px" width="14" height="10" viewBox="0 0 14 10"><path d="M2 8L7 3L12 8" stroke="#a3abb7" stroke-width="1.8" fill="none"/></svg>
<div class="a" style="left:2541px;top:173px;width:19px;height:1px;background:#3f4756"></div>
<div class="a" style="left:2545px;top:738px;width:9px;height:20px;border-radius:4.5px;background:#8994a6"></div>
<div class="a" style="left:2541px;top:1320px;width:19px;height:2px;background:#3f4756"></div>
<svg class="a" style="left:2543px;top:1327px" width="14" height="10" viewBox="0 0 14 10"><path d="M2 2L7 7L12 2" stroke="#a3abb7" stroke-width="1.8" fill="none"/></svg>
<div id="tog" class="a"></div><div id="togk" class="a"></div>
<div id="agt" class="a">Accelerated Graphics</div><div id="agt2" class="a">Tech Preview</div>
<div id="navbar" class="a"></div>
<svg class="a" style="left:2507px;top:157px" width="32" height="116" viewBox="0 0 32 116"><circle cx="26" cy="6" r="4.5" fill="#4f545c"/><path d="M24 4l4 4M28 4l-4 4" stroke="#e6e6e6" stroke-width="1.2"/><path d="M5 22Q5 18 10 18L22 18L22 30Q22 35 17 35L10 35Q5 35 5 30Z" fill="#d4d4d4"/><circle cx="13" cy="26" r="4" fill="none" stroke="#aaaaaa" stroke-width="1.3"/><rect x="16" y="31" width="11" height="6" fill="#4a7fb5" opacity="0.8"/><path d="M14 52h4" stroke="#555" stroke-width="1"/><path d="M3 58h26" stroke="#5a5f67" stroke-width="1"/><path d="M9 68L20 68L20 80L16 84L9 84Z" fill="#74a35a"/><circle cx="20" cy="82" r="3" fill="#d8d8d8"/><path d="M14 96h4" stroke="#555" stroke-width="1"/><circle cx="26" cy="110" r="4.5" fill="#4f545c"/><path d="M23.5 108h5M23.5 110l2.5 3l2.5-3" stroke="#e6e6e6" stroke-width="1" fill="none"/></svg>
<div class="wm" style="left:236px;top:125.5px">DOMV.UK</div>
<div class="wm" style="left:1219px;top:125.5px">DOMV.UK</div>
<div class="wm" style="left:2059px;top:125.5px">DOMV.UK</div>
<div class="wm" style="left:751px;top:437px">DOMV.UK</div>
<div class="wm" style="left:1826px;top:425.3px">DOMV.UK</div>
<div class="wm" style="left:1298px;top:730.5px">DOMV.UK</div>
<div class="wm" style="left:2119px;top:754px">DOMV.UK</div>
<div class="wm" style="left:231.5px;top:789.7px">DOMV.UK</div>
<div class="wm" style="left:780px;top:1067px">DOMV.UK</div>
<div class="wm" style="left:1806px;top:1077px">DOMV.UK</div>
</body></html>
